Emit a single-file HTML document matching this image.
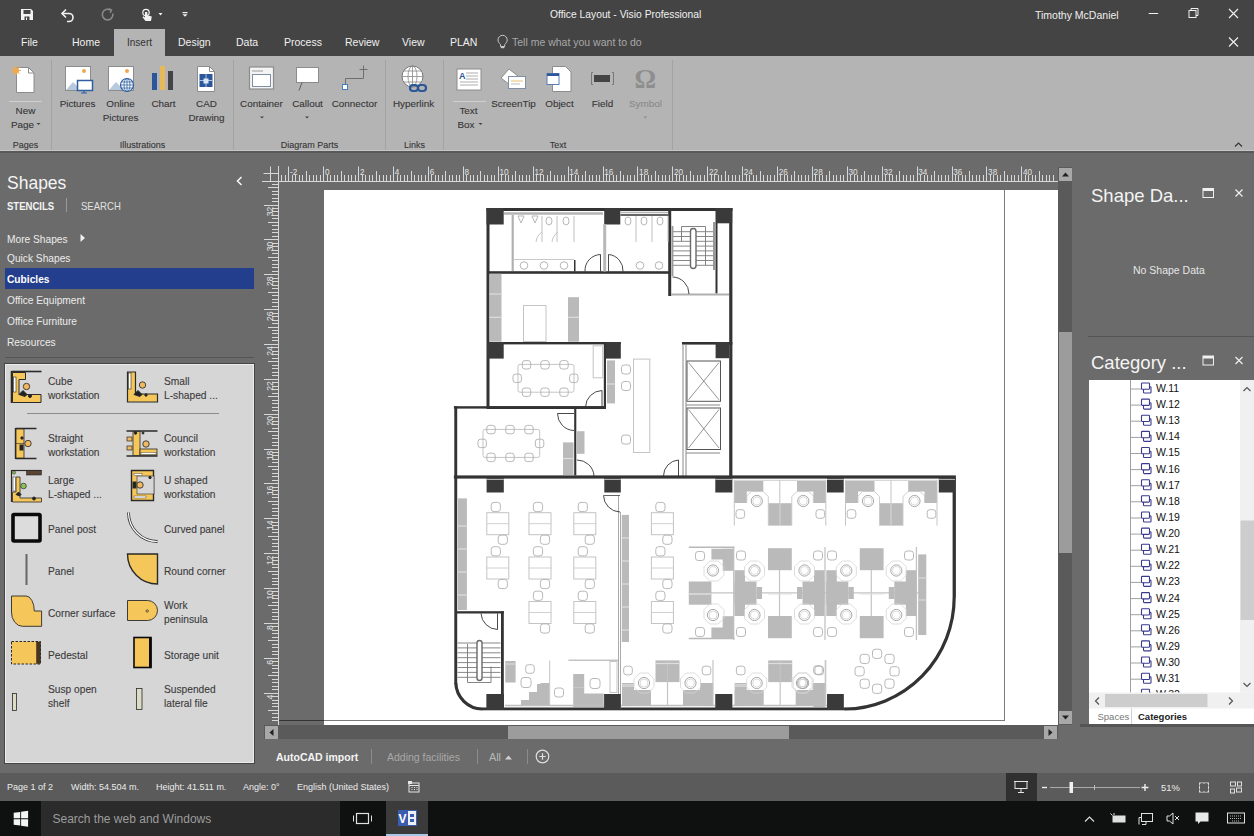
<!DOCTYPE html>
<html><head><meta charset="utf-8"><style>
*{margin:0;padding:0;box-sizing:border-box}
html,body{width:1254px;height:836px;overflow:hidden;background:#6b6b6b;font-family:"Liberation Sans",sans-serif}
.a{position:absolute}
.t{position:absolute;white-space:nowrap;line-height:1}
.rb{position:absolute;text-align:center;font-size:9.9px;line-height:14.2px;color:#353535;white-space:nowrap}
.gl{font-size:9px!important}
.st{position:absolute;font-size:10.2px;line-height:14.3px;color:#3a3a3a;white-space:nowrap}
.rb,.st{-webkit-text-stroke:0.1px currentColor}

</style></head><body>
<div class="a" style="left:0;top:0;width:1254px;height:56px;background:#444"></div>
<div class="a" style="left:114px;top:29px;width:51px;height:27px;background:#b4b4b4"></div>
<svg class="a" style="left:0;top:0" width="200" height="28" viewBox="0 0 200 28">
 <!-- save -->
 <path d="M21 9h10l2 2v9H21z" fill="#f2f2f2"/>
 <rect x="23.5" y="10" width="7" height="4" fill="#444"/>
 <rect x="24.5" y="16.5" width="5" height="3.5" fill="#444"/>
 <rect x="26" y="17.5" width="1" height="2.5" fill="#f2f2f2"/>
 <!-- undo -->
 <path d="M62.5 13.5h6.5a4 4 0 0 1 0 8h-2" fill="none" stroke="#f2f2f2" stroke-width="1.6"/>
 <path d="M66 9.5l-4 4 4 4" fill="none" stroke="#f2f2f2" stroke-width="1.6"/>
 <!-- redo (disabled) -->
 <path d="M110.5 10.2a5.3 5.3 0 1 0 2.3 3.5" fill="none" stroke="#8a8a8a" stroke-width="1.6"/>
 <path d="M108.5 8.6l3 1.3-1.3 3" fill="none" stroke="#8a8a8a" stroke-width="1.4"/>
 <!-- touch -->
 <circle cx="146" cy="12.5" r="3.2" fill="none" stroke="#f2f2f2" stroke-width="1.2"/>
 <path d="M145 12v5.5l-1.5-1.2-1 1 3 3.7h5.5l0.8-4.5-4.5-1.2V12z" fill="#f2f2f2"/>
 <path d="M158.5 13h4l-2 2.5z" fill="#f2f2f2"/>
 <!-- customize -->
 <rect x="182.5" y="12" width="5" height="1.2" fill="#f2f2f2"/>
 <path d="M182.5 14.3h5l-2.5 2.5z" fill="#f2f2f2"/>
 </svg>
<svg class="a" style="left:1140px;top:0" width="114" height="56" viewBox="1140 0 114 56">
 <rect x="1148.7" y="13" width="9.5" height="1" fill="#f2f2f2"/>
 <rect x="1189" y="10.5" width="7" height="7" fill="none" stroke="#f2f2f2" stroke-width="1"/>
 <path d="M1191 10.5V8.5h7v7h-2" fill="none" stroke="#f2f2f2" stroke-width="1"/>
 <path d="M1229 9l9 9M1238 9l-9 9" stroke="#f2f2f2" stroke-width="1.1"/>
 <path d="M1229 37.5l9 9M1238 37.5l-9 9" stroke="#f2f2f2" stroke-width="1.1"/>
</svg>
<div class="t" style="left:550px;top:9.5px;font-size:10.3px;color:#f0f0f0">Office Layout - Visio Professional</div>
<div class="t" style="left:1035px;top:9.5px;font-size:10.5px;color:#f0f0f0">Timothy McDaniel</div>
<div class="t" style="left:21px;top:37px;font-size:10.5px;color:#f0f0f0">File</div>
<div class="t" style="left:72px;top:37px;font-size:10.5px;color:#f0f0f0">Home</div>
<div class="t" style="left:127px;top:38px;font-size:10px;color:#333">Insert</div>
<div class="t" style="left:178px;top:37px;font-size:10.5px;color:#f0f0f0">Design</div>
<div class="t" style="left:236px;top:37px;font-size:10.5px;color:#f0f0f0">Data</div>
<div class="t" style="left:284px;top:37px;font-size:10.5px;color:#f0f0f0">Process</div>
<div class="t" style="left:345px;top:37px;font-size:10.5px;color:#f0f0f0">Review</div>
<div class="t" style="left:402px;top:37px;font-size:10.5px;color:#f0f0f0">View</div>
<div class="t" style="left:450px;top:37px;font-size:10.5px;color:#f0f0f0">PLAN</div>
<svg class="a" style="left:496px;top:34px" width="14" height="16" viewBox="0 0 14 16">
 <path d="M4.5 10.5c-1.5-1.5-2.5-2.8-2.5-4.6a4.6 4.6 0 0 1 9.2 0c0 1.8-1 3.1-2.5 4.6v2h-4.2z" fill="none" stroke="#c8c8c8" stroke-width="1"/>
 <rect x="4.8" y="13" width="3.6" height="1.2" fill="#c8c8c8"/>
</svg>
<div class="t" style="left:512px;top:37px;font-size:10.5px;color:#a8a8a8">Tell me what you want to do</div>
<div class="a" style="left:0;top:56px;width:1254px;height:95px;background:#b4b4b4"></div>
<div class="a" style="left:0;top:150px;width:1254px;height:1px;background:#c6c6c6"></div>
<div class="a" style="left:0;top:151px;width:1254px;height:2px;background:#595959"></div>
<svg class="a" style="left:0;top:56px" width="1254" height="95" viewBox="0 56 1254 95">
 <g stroke="#a3a3a3" stroke-width="1">
  <line x1="51.5" y1="60" x2="51.5" y2="150"/>
  <line x1="233.5" y1="60" x2="233.5" y2="150"/>
  <line x1="385.5" y1="60" x2="385.5" y2="150"/>
  <line x1="443.5" y1="60" x2="443.5" y2="150"/>
  <line x1="672.5" y1="60" x2="672.5" y2="150"/>
 </g>
 <g stroke="#cfcfcf" stroke-width="1">
  <line x1="9" y1="101.5" x2="42" y2="101.5"/>
  <line x1="453" y1="101.5" x2="486" y2="101.5"/>
 </g>
 <!-- new page -->
 <path d="M16.5 67.5h12l5.5 5.5v19.5h-17.5z" fill="#fff" stroke="#8c8c8c" stroke-width="1"/>
 <path d="M28.5 67.5v5.5h5.5" fill="none" stroke="#8c8c8c"/>
 <circle cx="16" cy="70.5" r="3" fill="#f0a950"/>
 <g stroke="#f0a950" stroke-width="1"><path d="M16 65.5v10M11 70.5h10M12.5 67l7 7M19.5 67l-7 7"/></g>
 <!-- pictures -->
 <rect x="65.5" y="66.5" width="25" height="24" fill="#fff" stroke="#8c8c8c"/>
 <path d="M66 90l7-8 5 5 3-3 7 6z" fill="#b7c9dc"/>
 <circle cx="84" cy="71" r="2" fill="#f0a950"/>
 <rect x="77.5" y="80.5" width="15" height="10" fill="#fff" stroke="#2f5f9f" stroke-width="1.5"/>
 <path d="M84 91v2h-3h6" stroke="#2f5f9f" stroke-width="1.2" fill="none"/>
 <!-- online pictures -->
 <rect x="108.5" y="66.5" width="25" height="24" fill="#fff" stroke="#8c8c8c"/>
 <path d="M109 90l7-8 5 5 3-3 7 6z" fill="#b7c9dc"/>
 <circle cx="127" cy="71" r="2" fill="#f0a950"/>
 <circle cx="127" cy="85" r="6.5" fill="#fff" stroke="#2f5f9f" stroke-width="1.2"/>
 <path d="M120.5 85h13M127 78.5v13M121.5 82h11M121.5 88h11" stroke="#2f5f9f" stroke-width="0.8"/>
 <ellipse cx="127" cy="85" rx="3" ry="6.5" fill="none" stroke="#2f5f9f" stroke-width="0.8"/>
 <!-- chart -->
 <rect x="152" y="73" width="5" height="17" fill="#2b579a"/>
 <rect x="160" y="66" width="5" height="24" fill="#e8b959"/>
 <rect x="168" y="71" width="5" height="19" fill="#444"/>
 <!-- CAD drawing -->
 <path d="M197.5 66.5h12l5 5v20h-17z" fill="#fff" stroke="#8c8c8c"/>
 <path d="M209.5 66.5v5h5" fill="none" stroke="#8c8c8c"/>
 <rect x="199.5" y="74" width="13" height="13" fill="#2b579a"/>
 <path d="M206 74v13M199.5 80.5h13" stroke="#a9c3e6" stroke-width="1"/>
 <rect x="203.5" y="78.5" width="5" height="5" fill="#dbe6f4"/>
 <!-- container -->
 <rect x="249.5" y="67" width="24" height="22" fill="#f4f4f4" stroke="#8c8c8c" stroke-width="1.2"/>
 <line x1="252" y1="71" x2="263" y2="71" stroke="#999"/>
 <rect x="252.5" y="74.5" width="18" height="12" fill="#fff" stroke="#7f8fa5"/>
 <!-- callout -->
 <rect x="296.5" y="67.5" width="22" height="15" fill="#fff" stroke="#8c8c8c"/>
 <line x1="302" y1="82.5" x2="299" y2="90.5" stroke="#555" stroke-width="0.9"/>
 <!-- connector -->
 <path d="M363.5 69v9.5h-18v6.5" fill="none" stroke="#6e6e6e" stroke-width="1"/>
 <path d="M359.5 69.5h8M363.5 65.5v8" stroke="#6e6e6e"/>
 <rect x="342.5" y="84.5" width="5" height="5" fill="#fff" stroke="#4a7cc0"/>
 <!-- hyperlink -->
 <circle cx="412.5" cy="76.5" r="10.5" fill="#fff" stroke="#777" stroke-width="1"/>
 <ellipse cx="412.5" cy="76.5" rx="4.5" ry="10.5" fill="none" stroke="#888" stroke-width="0.8"/>
 <path d="M402 76.5h21M403.5 71h18M403.5 82h18M412.5 66v21" stroke="#888" stroke-width="0.8"/>
 <g fill="none" stroke="#2b579a" stroke-width="2.2">
  <rect x="410" y="85" width="8" height="6" rx="3"/>
  <rect x="418" y="85" width="8" height="6" rx="3"/>
 </g>
 <!-- text box -->
 <rect x="457" y="69" width="24" height="21" fill="#fff" stroke="#8c8c8c"/>
 <text x="459" y="79" font-family="Liberation Sans" font-size="9" font-weight="bold" fill="#2b579a">A</text>
 <g stroke="#999" stroke-width="0.8"><path d="M466 73h12M466 76h12M466 79h12M460 82h18M460 85h18"/></g>
 <!-- screentip -->
 <path d="M501 78l8-9 9 7-8 9z" fill="#fff" stroke="#8c8c8c"/>
 <rect x="508.5" y="76.5" width="17" height="12" fill="#fff" stroke="#7f8fa5"/>
 <g stroke="#e8c070" stroke-width="1"><path d="M511 81h12"/></g>
 <g stroke="#aaa" stroke-width="0.8"><path d="M511 84h9"/></g>
 <!-- object -->
 <path d="M552.5 66.5h13l5.5 5.5v19.5h-18.5z" fill="#fff" stroke="#8c8c8c"/>
 <rect x="547" y="73.5" width="12" height="11" fill="#fff" stroke="#5b7db0" stroke-width="1"/>
 <rect x="547" y="73.5" width="12" height="2.5" fill="#2b579a"/>
 <!-- field -->
 <path d="M593 72.5h-1.5v12h1.5M612 72.5h1.5v12H612" fill="none" stroke="#777"/>
 <rect x="594" y="75" width="16" height="7" fill="#444"/>
 <!-- symbol -->
 <text x="645.3" y="87.5" text-anchor="middle" font-family="Liberation Serif" font-size="27" font-weight="bold" fill="#8e8e8e">&#937;</text>
 <!-- dropdown arrows -->
 <g fill="#444">
  <path d="M36.5 123h4l-2 2z"/><path d="M478.5 123h4l-2 2z"/>
  <path d="M260 116.5h4l-2 2z"/><path d="M305 116.5h4l-2 2z"/>
 </g>
 <path d="M643.3 116.5h4l-2 2z" fill="#8e8e8e"/>
 <!-- collapse -->
 <path d="M1235 146.5l3.5-3.5 3.5 3.5" fill="none" stroke="#333" stroke-width="1.2"/>
</svg>
<div class="rb" style="left:0;width:51px;top:104px">New</div>
<div class="rb" style="left:11px;top:118px;text-align:left">Page</div>
<div class="rb" style="left:52px;width:51px;top:97px">Pictures</div>
<div class="rb" style="left:95px;width:51px;top:97px">Online<br>Pictures</div>
<div class="rb" style="left:138px;width:51px;top:97px">Chart</div>
<div class="rb" style="left:181px;width:51px;top:97px">CAD<br>Drawing</div>
<div class="rb" style="left:236px;width:51px;top:97px">Container</div>
<div class="rb" style="left:282px;width:51px;top:97px">Callout</div>
<div class="rb" style="left:329px;width:51px;top:97px">Connector</div>
<div class="rb" style="left:388px;width:51px;top:97px">Hyperlink</div>
<div class="rb" style="left:443px;width:51px;top:104px">Text</div>
<div class="rb" style="left:457.5px;top:118px;text-align:left">Box</div>
<div class="rb" style="left:488px;width:51px;top:97px">ScreenTip</div>
<div class="rb" style="left:534px;width:51px;top:97px">Object</div>
<div class="rb" style="left:577px;width:51px;top:97px">Field</div>
<div class="rb" style="left:620px;width:51px;top:97px;color:#8a8a8a">Symbol</div>
<div class="rb gl" style="left:0;width:51px;top:138px">Pages</div>
<div class="rb gl" style="left:52px;width:181px;top:138px">Illustrations</div>
<div class="rb gl" style="left:234px;width:151px;top:138px">Diagram Parts</div>
<div class="rb gl" style="left:386px;width:57px;top:138px">Links</div>
<div class="rb gl" style="left:444px;width:228px;top:138px">Text</div>
<div class="t" style="left:7px;top:175px;font-size:17.5px;color:#f4f4f4">Shapes</div>
<svg class="a" style="left:234px;top:175px" width="10" height="12" viewBox="0 0 10 12"><path d="M7.5 2l-4 4 4 4" fill="none" stroke="#f4f4f4" stroke-width="1.6"/></svg>
<div class="t" style="left:7px;top:201px;font-size:11.5px;font-weight:bold;color:#f4f4f4;transform:scaleX(0.83);transform-origin:0 0">STENCILS</div>
<div class="a" style="left:66px;top:198px;width:1px;height:14px;background:#999"></div>
<div class="t" style="left:81px;top:201px;font-size:11.5px;color:#e0e0e0;transform:scaleX(0.83);transform-origin:0 0">SEARCH</div>
<div class="t" style="left:7px;top:234.5px;font-size:10.2px;color:#ececec">More Shapes</div>
<svg class="a" style="left:79px;top:232px" width="8" height="12" viewBox="0 0 8 12"><path d="M1.5 2l4.5 4-4.5 4z" fill="#f0f0f0"/></svg>
<div class="t" style="left:7px;top:254px;font-size:10.2px;color:#ececec">Quick Shapes</div>
<div class="a" style="left:5px;top:268px;width:249px;height:21px;background:#243e8e"></div>
<div class="t" style="left:7px;top:275px;font-size:10.2px;font-weight:bold;color:#fff">Cubicles</div>
<div class="t" style="left:7px;top:296px;font-size:10.2px;color:#ececec">Office Equipment</div>
<div class="t" style="left:7px;top:317px;font-size:10.2px;color:#ececec">Office Furniture</div>
<div class="t" style="left:7px;top:338px;font-size:10.2px;color:#ececec">Resources</div>
<div class="a" style="left:5px;top:357px;width:249px;height:1px;background:#555"></div>
<div class="a" style="left:4px;top:362.5px;width:251px;height:401px;background:#d6d6d6;border:1px solid #454545;box-shadow:inset 0 0 0 1px #ececec"></div>
<div class="a" style="left:27px;top:413px;width:192px;height:1px;background:#8c8c8c"></div>
<svg class="a" style="left:0;top:360px" width="260" height="360" viewBox="0 360 260 360">
 <defs>
  <g id="chair"><circle r="3.2" fill="#f0b860" stroke="#333" stroke-width="0.9"/></g>
 </defs>
 <g stroke="#2a2a2a" stroke-width="1">
 <!-- cube workstation -->
 <path d="M11.5 371.5h30" stroke-width="1.6"/>
 <path d="M11.5 371v32" stroke-width="1.6"/>
 <path d="M12.5 372.5h13v7h-6.5v15h22v8h-28.5z" fill="#f5c75a"/>
 <rect x="13.5" y="377" width="2.5" height="15" fill="#fff" stroke-width="0.6"/>
 <path d="M19 394.5l4-4 4 4-2 2z" fill="#222"/>
 <circle cx="30" cy="396" r="1.5" fill="#222"/>
 <use href="#chair" x="26.5" y="386.5"/>
 <!-- small L -->
 <path d="M127.5 372h8v22h22v8h-30z" fill="#f5c75a" stroke-width="1.2"/>
 <rect x="128.5" y="373" width="2.5" height="16" fill="#fff" stroke-width="0.6"/>
 <path d="M134 394.5l4-4 4 4-2 2z" fill="#222"/>
 <circle cx="146" cy="395" r="1.2" fill="#222"/>
 <use href="#chair" x="142.5" y="385"/>
 <!-- straight -->
 <path d="M15.5 428.5h21M15.5 458.5h21" stroke-width="1.4"/>
 <path d="M15.5 428v31" stroke-width="1.4"/>
 <rect x="16" y="429" width="8" height="29" fill="#f5c75a" stroke-width="0.8"/>
 <path d="M16 443.5h8" stroke-width="0.6"/>
 <rect x="20" y="445" width="3" height="5" fill="#222"/>
 <circle cx="22" cy="438" r="1.2" fill="#222"/>
 <use href="#chair" x="28" y="443.5"/>
 <!-- council -->
 <path d="M126.5 431h31M126.5 456h31" stroke-width="1.4"/>
 <rect x="133" y="431.5" width="7" height="24" fill="#f5c75a" stroke-width="0.8"/>
 <rect x="140" y="449" width="17" height="6" fill="#f5c75a" stroke-width="0.8"/>
 <rect x="141" y="452.5" width="15" height="2" fill="#fff" stroke-width="0.4"/>
 <rect x="127" y="437" width="5" height="4" fill="#f0b860" stroke-width="0.7"/>
 <rect x="127" y="446" width="5" height="4" fill="#f0b860" stroke-width="0.7"/>
 <circle cx="135.5" cy="433" r="1.3" fill="#222"/><circle cx="143" cy="433" r="1" fill="#222"/>
 <use href="#chair" x="146" y="444"/>
 <!-- large L -->
 <path d="M11.5 470.5h30" stroke-width="1.2"/>
 <path d="M11.5 470v32" stroke-width="1.2"/>
 <rect x="26.5" y="470.5" width="15" height="4.5" fill="#5a4330" stroke-width="0.6"/>
 <path d="M12.5 492h3.5v-15h4v21h21.5v4h-29z" fill="#f5c75a" stroke-width="0.8"/>
 <rect x="13" y="477" width="2.5" height="14" fill="#fff" stroke-width="0.5"/>
 <circle cx="14" cy="472.5" r="1.6" fill="#7fb74a" stroke-width="0.5"/>
 <circle cx="23.5" cy="486" r="2.8" fill="#8cc056" stroke-width="0.7"/>
 <circle cx="34" cy="498.5" r="1.5" fill="#222"/>
 <path d="M16 494.5l2.5-2.5 2.5 2.5-1.5 1.5z" fill="#222"/>
 <!-- U shaped -->
 <path d="M131.5 470.5h22v30h-22z" fill="#f5c75a" stroke-width="1.4"/>
 <rect x="137" y="476" width="17" height="18" fill="#d6d6d6" stroke-width="0.6"/>
 <rect x="134" y="473.5" width="8" height="2" fill="#fff" stroke-width="0.4"/>
 <rect x="134" y="496" width="12" height="2" fill="#fff" stroke-width="0.4"/>
 <rect x="133" y="482" width="3" height="6" fill="#222"/>
 <circle cx="150" cy="477.5" r="1.2" fill="#222"/>
 <use href="#chair" x="140" y="485"/>
 <!-- panel post -->
 <rect x="13" y="514.5" width="27" height="26.5" fill="#dcdcdc" stroke="#0a0a0a" stroke-width="3.6" rx="1"/>
 <!-- curved panel -->
 <path d="M128.5 512.5A29 29 0 0 0 157.5 541.5" fill="none" stroke="#333" stroke-width="2.8"/>
 <path d="M128.5 512.5A29 29 0 0 0 157.5 541.5" fill="none" stroke="#fff" stroke-width="1.2"/>
 <!-- panel -->
 <path d="M26.5 554v31" stroke="#666" stroke-width="2"/>
 <!-- round corner -->
 <path d="M127.5 554h30v30A30 30 0 0 1 127.5 554z" fill="#f5c75a" stroke-width="1.4"/>
 <!-- corner surface -->
 <path d="M11.5 596h14.5A8.3 15 0 0 1 34.3 611h7.3v15.3h-19A11 14 0 0 1 11.5 612z" fill="#f5c75a" stroke-width="0.9"/>
 <!-- work peninsula -->
 <path d="M127.5 600.5h20a10 10 0 0 1 0 20h-20z" fill="#f5c75a" stroke-width="0.9"/>
 <circle cx="147.2" cy="611" r="1.2" fill="none" stroke-width="0.7"/>
 <!-- pedestal -->
 <rect x="11.5" y="641.5" width="29" height="22.5" fill="#f5c75a" stroke-width="1" stroke-dasharray="2.5 1.5"/>
 <rect x="36.5" y="642" width="4" height="21.5" fill="#4a3420" stroke-width="0.5"/>
 <!-- storage unit -->
 <rect x="134" y="637.5" width="17" height="30" fill="#f5c75a" stroke="#0a0a0a" stroke-width="1.6"/>
 <rect x="149" y="637.5" width="2.5" height="30" fill="#0a0a0a" stroke="none"/>
 <!-- susp open shelf -->
 <rect x="12.5" y="693.5" width="4" height="17" fill="#dcdcc4" stroke-width="0.8"/>
 <!-- suspended lateral file -->
 <rect x="136.5" y="688.5" width="5.5" height="21" fill="#dcdcc4" stroke-width="0.8"/>
 </g>
</svg>
<div class="st" style="left:48px;top:375px">Cube<br>workstation</div>
<div class="st" style="left:164px;top:375px">Small<br>L-shaped ...</div>
<div class="st" style="left:48px;top:432px">Straight<br>workstation</div>
<div class="st" style="left:164px;top:432px">Council<br>workstation</div>
<div class="st" style="left:48px;top:474px">Large<br>L-shaped ...</div>
<div class="st" style="left:164px;top:474px">U shaped<br>workstation</div>
<div class="st" style="left:48px;top:523px">Panel post</div>
<div class="st" style="left:164px;top:523px">Curved panel</div>
<div class="st" style="left:48px;top:565px">Panel</div>
<div class="st" style="left:164px;top:565px">Round corner</div>
<div class="st" style="left:48px;top:607px">Corner surface</div>
<div class="st" style="left:164px;top:599px">Work<br>peninsula</div>
<div class="st" style="left:48px;top:649px">Pedestal</div>
<div class="st" style="left:164px;top:649px">Storage unit</div>
<div class="st" style="left:48px;top:683px">Susp open<br>shelf</div>
<div class="st" style="left:164px;top:683px">Suspended<br>lateral file</div>
<svg class="a" style="left:258px;top:160px" width="800" height="565" viewBox="258 160 800 565">
<path d="M262 181.5H1058" stroke="#d8d8d8" stroke-width="1"/>
<path d="M278.5 166V725" stroke="#d8d8d8" stroke-width="1"/>
<path d="M270.5 166.5v14.5M263.5 173.5h15" stroke="#d8d8d8" stroke-width="1"/>
<path d="M281.5 175V181M285.5 175V181M288.5 166.5V181M292.5 175V181M295.5 175V181M299.5 175V181M302.5 175V181M306.5 171V181M309.5 175V181M313.5 175V181M316.5 175V181M320.5 175V181M323.5 166.5V181M327.5 175V181M330.5 175V181M334.5 175V181M337.5 175V181M341.5 171V181M344.5 175V181M348.5 175V181M351.5 175V181M355.5 175V181M358.5 166.5V181M362.5 175V181M365.5 175V181M369.5 175V181M372.5 175V181M376.5 171V181M379.5 175V181M383.5 175V181M386.5 175V181M390.5 175V181M393.5 166.5V181M397.5 175V181M400.5 175V181M404.5 175V181M407.5 175V181M411.5 171V181M414.5 175V181M418.5 175V181M421.5 175V181M425.5 175V181M428.5 166.5V181M431.5 175V181M435.5 175V181M438.5 175V181M442.5 175V181M445.5 171V181M449.5 175V181M452.5 175V181M456.5 175V181M459.5 175V181M463.5 166.5V181M466.5 175V181M470.5 175V181M473.5 175V181M477.5 175V181M480.5 171V181M484.5 175V181M487.5 175V181M491.5 175V181M494.5 175V181M498.5 166.5V181M501.5 175V181M505.5 175V181M508.5 175V181M512.5 175V181M515.5 171V181M519.5 175V181M522.5 175V181M526.5 175V181M529.5 175V181M533.5 166.5V181M536.5 175V181M540.5 175V181M543.5 175V181M547.5 175V181M550.5 171V181M554.5 175V181M557.5 175V181M561.5 175V181M564.5 175V181M568.5 166.5V181M571.5 175V181M575.5 175V181M578.5 175V181M582.5 175V181M585.5 171V181M589.5 175V181M592.5 175V181M596.5 175V181M599.5 175V181M603.5 166.5V181M606.5 175V181M609.5 175V181M613.5 175V181M616.5 175V181M620.5 171V181M623.5 175V181M627.5 175V181M630.5 175V181M634.5 175V181M637.5 166.5V181M641.5 175V181M644.5 175V181M648.5 175V181M651.5 175V181M655.5 171V181M658.5 175V181M662.5 175V181M665.5 175V181M669.5 175V181M672.5 166.5V181M676.5 175V181M679.5 175V181M683.5 175V181M686.5 175V181M690.5 171V181M693.5 175V181M697.5 175V181M700.5 175V181M704.5 175V181M707.5 166.5V181M711.5 175V181M714.5 175V181M718.5 175V181M721.5 175V181M725.5 171V181M728.5 175V181M732.5 175V181M735.5 175V181M739.5 175V181M742.5 166.5V181M746.5 175V181M749.5 175V181M753.5 175V181M756.5 175V181M760.5 171V181M763.5 175V181M767.5 175V181M770.5 175V181M774.5 175V181M777.5 166.5V181M780.5 175V181M784.5 175V181M787.5 175V181M791.5 175V181M794.5 171V181M798.5 175V181M801.5 175V181M805.5 175V181M808.5 175V181M812.5 166.5V181M815.5 175V181M819.5 175V181M822.5 175V181M826.5 175V181M829.5 171V181M833.5 175V181M836.5 175V181M840.5 175V181M843.5 175V181M847.5 166.5V181M850.5 175V181M854.5 175V181M857.5 175V181M861.5 175V181M864.5 171V181M868.5 175V181M871.5 175V181M875.5 175V181M878.5 175V181M882.5 166.5V181M885.5 175V181M889.5 175V181M892.5 175V181M896.5 175V181M899.5 171V181M903.5 175V181M906.5 175V181M910.5 175V181M913.5 175V181M917.5 166.5V181M920.5 175V181M924.5 175V181M927.5 175V181M931.5 175V181M934.5 171V181M938.5 175V181M941.5 175V181M945.5 175V181M948.5 175V181M952.5 166.5V181M955.5 175V181M958.5 175V181M962.5 175V181M965.5 175V181M969.5 171V181M972.5 175V181M976.5 175V181M979.5 175V181M983.5 175V181M986.5 166.5V181M990.5 175V181M993.5 175V181M997.5 175V181M1000.5 175V181M1004.5 171V181M1007.5 175V181M1011.5 175V181M1014.5 175V181M1018.5 175V181M1021.5 166.5V181M1025.5 175V181M1028.5 175V181M1032.5 175V181M1035.5 175V181M1039.5 171V181M1042.5 175V181M1046.5 175V181M1049.5 175V181M1053.5 175V181" stroke="#d8d8d8" stroke-width="1"/>
<g font-family="Liberation Sans"><text x="290.1" y="175.3" font-size="8.2" fill="#e4e4e4">-2</text><text x="325.0" y="175.3" font-size="8.2" fill="#e4e4e4">0</text><text x="359.9" y="175.3" font-size="8.2" fill="#e4e4e4">2</text><text x="394.8" y="175.3" font-size="8.2" fill="#e4e4e4">4</text><text x="429.7" y="175.3" font-size="8.2" fill="#e4e4e4">6</text><text x="464.6" y="175.3" font-size="8.2" fill="#e4e4e4">8</text><text x="499.5" y="175.3" font-size="8.2" fill="#e4e4e4">10</text><text x="534.4" y="175.3" font-size="8.2" fill="#e4e4e4">12</text><text x="569.3" y="175.3" font-size="8.2" fill="#e4e4e4">14</text><text x="604.2" y="175.3" font-size="8.2" fill="#e4e4e4">16</text><text x="639.1" y="175.3" font-size="8.2" fill="#e4e4e4">18</text><text x="674.0" y="175.3" font-size="8.2" fill="#e4e4e4">20</text><text x="708.9" y="175.3" font-size="8.2" fill="#e4e4e4">22</text><text x="743.8" y="175.3" font-size="8.2" fill="#e4e4e4">24</text><text x="778.7" y="175.3" font-size="8.2" fill="#e4e4e4">26</text><text x="813.6" y="175.3" font-size="8.2" fill="#e4e4e4">28</text><text x="848.5" y="175.3" font-size="8.2" fill="#e4e4e4">30</text><text x="883.4" y="175.3" font-size="8.2" fill="#e4e4e4">32</text><text x="918.3" y="175.3" font-size="8.2" fill="#e4e4e4">34</text><text x="953.2" y="175.3" font-size="8.2" fill="#e4e4e4">36</text><text x="988.1" y="175.3" font-size="8.2" fill="#e4e4e4">38</text><text x="1023.0" y="175.3" font-size="8.2" fill="#e4e4e4">40</text></g>
<path d="M272 184.5H278M268 187.5H278M272 191.5H278M272 194.5H278M272 198.5H278M272 201.5H278M264 205.5H278M272 208.5H278M272 211.5H278M272 215.5H278M272 218.5H278M268 222.5H278M272 225.5H278M272 229.5H278M272 232.5H278M272 236.5H278M264 239.5H278M272 243.5H278M272 246.5H278M272 250.5H278M272 253.5H278M268 257.5H278M272 260.5H278M272 264.5H278M272 267.5H278M272 271.5H278M264 274.5H278M272 278.5H278M272 281.5H278M272 285.5H278M272 288.5H278M268 292.5H278M272 295.5H278M272 299.5H278M272 302.5H278M272 306.5H278M264 309.5H278M272 313.5H278M272 316.5H278M272 320.5H278M272 323.5H278M268 327.5H278M272 330.5H278M272 333.5H278M272 337.5H278M272 340.5H278M264 344.5H278M272 347.5H278M272 351.5H278M272 354.5H278M272 358.5H278M268 361.5H278M272 365.5H278M272 368.5H278M272 372.5H278M272 375.5H278M264 379.5H278M272 382.5H278M272 386.5H278M272 389.5H278M272 393.5H278M268 396.5H278M272 400.5H278M272 403.5H278M272 407.5H278M272 410.5H278M264 414.5H278M272 417.5H278M272 421.5H278M272 424.5H278M272 428.5H278M268 431.5H278M272 435.5H278M272 438.5H278M272 442.5H278M272 445.5H278M264 449.5H278M272 452.5H278M272 455.5H278M272 459.5H278M272 462.5H278M268 466.5H278M272 469.5H278M272 473.5H278M272 476.5H278M272 480.5H278M264 483.5H278M272 487.5H278M272 490.5H278M272 494.5H278M272 497.5H278M268 501.5H278M272 504.5H278M272 508.5H278M272 511.5H278M272 515.5H278M264 518.5H278M272 522.5H278M272 525.5H278M272 529.5H278M272 532.5H278M268 536.5H278M272 539.5H278M272 543.5H278M272 546.5H278M272 550.5H278M264 553.5H278M272 557.5H278M272 560.5H278M272 564.5H278M272 567.5H278M268 571.5H278M272 574.5H278M272 578.5H278M272 581.5H278M272 584.5H278M264 588.5H278M272 591.5H278M272 595.5H278M272 598.5H278M272 602.5H278M268 605.5H278M272 609.5H278M272 612.5H278M272 616.5H278M272 619.5H278M264 623.5H278M272 626.5H278M272 630.5H278M272 633.5H278M272 637.5H278M268 640.5H278M272 644.5H278M272 647.5H278M272 651.5H278M272 654.5H278M264 658.5H278M272 661.5H278M272 665.5H278M272 668.5H278M272 672.5H278M268 675.5H278M272 679.5H278M272 682.5H278M272 686.5H278M272 689.5H278M264 693.5H278M272 696.5H278M272 700.5H278M272 703.5H278M272 706.5H278M268 710.5H278M272 713.5H278M272 717.5H278M272 720.5H278" stroke="#d8d8d8" stroke-width="1"/>
<g font-family="Liberation Sans"><text transform="translate(272.5 206.8) rotate(-90)" text-anchor="end" font-size="8.6" fill="#e4e4e4">32</text><text transform="translate(272.5 241.7) rotate(-90)" text-anchor="end" font-size="8.6" fill="#e4e4e4">30</text><text transform="translate(272.5 276.5) rotate(-90)" text-anchor="end" font-size="8.6" fill="#e4e4e4">28</text><text transform="translate(272.5 311.4) rotate(-90)" text-anchor="end" font-size="8.6" fill="#e4e4e4">26</text><text transform="translate(272.5 346.2) rotate(-90)" text-anchor="end" font-size="8.6" fill="#e4e4e4">24</text><text transform="translate(272.5 381.1) rotate(-90)" text-anchor="end" font-size="8.6" fill="#e4e4e4">22</text><text transform="translate(272.5 416.0) rotate(-90)" text-anchor="end" font-size="8.6" fill="#e4e4e4">20</text><text transform="translate(272.5 450.8) rotate(-90)" text-anchor="end" font-size="8.6" fill="#e4e4e4">18</text><text transform="translate(272.5 485.7) rotate(-90)" text-anchor="end" font-size="8.6" fill="#e4e4e4">16</text><text transform="translate(272.5 520.5) rotate(-90)" text-anchor="end" font-size="8.6" fill="#e4e4e4">14</text><text transform="translate(272.5 555.4) rotate(-90)" text-anchor="end" font-size="8.6" fill="#e4e4e4">12</text><text transform="translate(272.5 590.3) rotate(-90)" text-anchor="end" font-size="8.6" fill="#e4e4e4">10</text><text transform="translate(272.5 625.1) rotate(-90)" text-anchor="end" font-size="8.6" fill="#e4e4e4">8</text><text transform="translate(272.5 660.0) rotate(-90)" text-anchor="end" font-size="8.6" fill="#e4e4e4">6</text><text transform="translate(272.5 694.8) rotate(-90)" text-anchor="end" font-size="8.6" fill="#e4e4e4">4</text></g>
</svg>
<div class="a" style="left:324px;top:190px;width:734px;height:535px;background:#fff"></div>
<div class="a" style="left:1003.5px;top:190px;width:1.5px;height:531px;background:#7a7a7a"></div>
<div class="a" style="left:324px;top:719.5px;width:681px;height:1.5px;background:#7a7a7a"></div>
<div class="a" style="left:279px;top:719.5px;width:45px;height:1.5px;background:#333"></div>
<div class="a" style="left:1058px;top:167px;width:14px;height:558px;background:#5a5a5a"></div>
<div class="a" style="left:1059px;top:168px;width:13px;height:13px;background:#a8a8a8"></div>
<svg class="a" style="left:1059px;top:168px" width="13" height="13"><path d="M3 8.5h7l-3.5-4z" fill="#222"/></svg>
<div class="a" style="left:1059px;top:331.5px;width:13px;height:221.5px;background:#9c9c9c"></div>
<div class="a" style="left:1059px;top:711px;width:13px;height:13px;background:#a8a8a8"></div>
<svg class="a" style="left:1059px;top:711px" width="13" height="13"><path d="M3 4.5h7l-3.5 4z" fill="#222"/></svg>
<div class="a" style="left:264px;top:725px;width:794px;height:14px;background:#5a5a5a"></div>
<div class="a" style="left:265px;top:726px;width:13px;height:13px;background:#a8a8a8"></div>
<svg class="a" style="left:265px;top:726px" width="13" height="13"><path d="M8.5 3v7l-4-3.5z" fill="#222"/></svg>
<div class="a" style="left:507.5px;top:726px;width:281px;height:13px;background:#9c9c9c"></div>
<div class="a" style="left:1044px;top:726px;width:13px;height:13px;background:#a8a8a8"></div>
<svg class="a" style="left:1044px;top:726px" width="13" height="13"><path d="M4.5 3v7l4-3.5z" fill="#222"/></svg><svg class="a" style="left:440px;top:200px" width="530" height="520" viewBox="440 200 530 520"><rect x="486.5" y="208.0" width="246.0" height="3.0" fill="#333"/><rect x="486.5" y="208.0" width="3.0" height="200.0" fill="#333"/><rect x="729.2" y="208.0" width="3.2" height="270.0" fill="#333"/><rect x="489.0" y="271.2" width="182.0" height="2.6" fill="#333"/><rect x="668.2" y="211.0" width="3.0" height="85.0" fill="#333"/><rect x="715.5" y="223.0" width="2.0" height="70.5" fill="#333"/><path d="M671.0 294.5L729.0 294.5" stroke="#b0b0b0" stroke-width="2"/><rect x="486.5" y="208.0" width="17.2" height="16.5" fill="#3a3a3a"/><rect x="604.2" y="208.0" width="16.1" height="16.5" fill="#3a3a3a"/><rect x="715.5" y="208.0" width="16.7" height="15.3" fill="#3a3a3a"/><path d="M504.0 213.5L603.0 213.5" stroke="#b5b5b5" stroke-width="2.5"/><path d="M620.5 212.5L668.0 212.5" stroke="#b5b5b5" stroke-width="1.5"/><path d="M620.5 215.0L668.0 215.0" stroke="#333" stroke-width="1.3"/><rect x="603.2" y="224.0" width="3.0" height="47.5" fill="#b8b8b8"/><path d="M512.7 215.0L512.7 271.0" stroke="#b0b0b0" stroke-width="2.2"/><path d="M542.0 216.0L542.0 242.0" stroke="#c0c0c0" stroke-width="1"/><path d="M557.0 216.0L557.0 242.0" stroke="#c0c0c0" stroke-width="1"/><path d="M574.0 216.0L574.0 242.0" stroke="#c0c0c0" stroke-width="1"/><path d="M636.0 216.0L636.0 242.0" stroke="#c0c0c0" stroke-width="1"/><path d="M652.0 216.0L652.0 242.0" stroke="#c0c0c0" stroke-width="1"/><path d="M668.0 216.0L668.0 242.0" stroke="#c0c0c0" stroke-width="1"/><path d="M518 216l3 7 3-7z" stroke="#b8b8b8" stroke-width="1" fill="none"/><path d="M532 216l3 7 3-7z" stroke="#b8b8b8" stroke-width="1" fill="none"/><ellipse cx="549" cy="221" rx="3" ry="4" fill="none" stroke="#b8b8b8" stroke-width="1"/><ellipse cx="566" cy="221" rx="3" ry="4" fill="none" stroke="#b8b8b8" stroke-width="1"/><ellipse cx="628" cy="221" rx="3" ry="4" fill="none" stroke="#b8b8b8" stroke-width="1"/><ellipse cx="644" cy="221" rx="3" ry="4" fill="none" stroke="#b8b8b8" stroke-width="1"/><ellipse cx="660" cy="221" rx="3" ry="4" fill="none" stroke="#b8b8b8" stroke-width="1"/><circle cx="524.0" cy="265.5" r="3.8" fill="none" stroke="#b5b5b5" stroke-width="1"/><circle cx="544.0" cy="265.5" r="3.8" fill="none" stroke="#b5b5b5" stroke-width="1"/><circle cx="564.0" cy="265.5" r="3.8" fill="none" stroke="#b5b5b5" stroke-width="1"/><circle cx="640.0" cy="265.5" r="3.8" fill="none" stroke="#b5b5b5" stroke-width="1"/><circle cx="659.0" cy="265.5" r="3.8" fill="none" stroke="#b5b5b5" stroke-width="1"/><path d="M513.0 259.5L574.0 259.5" stroke="#c8c8c8" stroke-width="1"/><rect x="574.0" y="260.0" width="1.5" height="11.5" fill="#333"/><path d="M585 271.5A16 16 0 0 1 600.5 254.5V271.5" stroke="#333" stroke-width="0.9" fill="none"/><path d="M608.5 271.5V254.5A16 16 0 0 1 623 271.5" stroke="#333" stroke-width="0.9" fill="none"/><path d="M552 242A14 14 0 0 1 558 232" stroke="#c0c0c0" stroke-width="0.9" fill="none"/><path d="M536 242A14 14 0 0 1 542 232" stroke="#c0c0c0" stroke-width="0.9" fill="none"/><path d="M673.0 231.7L714.0 231.7" stroke="#888" stroke-width="1"/><path d="M673.0 236.5L714.0 236.5" stroke="#888" stroke-width="1"/><path d="M673.0 241.3L714.0 241.3" stroke="#888" stroke-width="1"/><path d="M673.0 246.1L714.0 246.1" stroke="#888" stroke-width="1"/><path d="M673.0 250.9L714.0 250.9" stroke="#888" stroke-width="1"/><path d="M673.0 255.7L714.0 255.7" stroke="#888" stroke-width="1"/><path d="M673.0 260.5L714.0 260.5" stroke="#888" stroke-width="1"/><path d="M673.0 265.3L714.0 265.3" stroke="#888" stroke-width="1"/><rect x="690.5" y="228.5" width="5.5" height="40" rx="2.7" fill="#fff" stroke="#6a6a6a" stroke-width="1.4"/><path d="M681.5 241.5V226.5H705.5V265" stroke="#777" stroke-width="0.9" fill="none"/><path d="M672.5 226.0L672.5 276.0" stroke="#999" stroke-width="1.8"/><path d="M714.0 222.0L714.0 270.0" stroke="#999" stroke-width="2"/><path d="M672.5 277A17 17 0 0 1 689 294" stroke="#333" stroke-width="0.9" fill="none"/><rect x="489.5" y="273.8" width="12.0" height="67.9" fill="#bababa"/><path d="M489.5 294.0L501.5 294.0" stroke="#dedede" stroke-width="1.2"/><path d="M489.5 317.3L501.5 317.3" stroke="#dedede" stroke-width="1.2"/><rect x="523.5" y="305.5" width="22.5" height="36.0" fill="none" stroke="#c4c4c4" stroke-width="1"/><rect x="568.0" y="297.2" width="11.0" height="44.5" fill="#bababa"/><path d="M568.0 317.3L579.0 317.3" stroke="#dedede" stroke-width="1.2"/><rect x="487.0" y="342.0" width="133.8" height="2.4" fill="#333"/><rect x="682.0" y="342.0" width="50.4" height="2.6" fill="#333"/><rect x="487.0" y="342.0" width="16.7" height="16.6" fill="#3a3a3a"/><rect x="604.2" y="342.0" width="16.6" height="16.6" fill="#3a3a3a"/><rect x="715.6" y="342.0" width="13.6" height="16.2" fill="#3a3a3a"/><rect x="603.8" y="342.0" width="2.2" height="66.5" fill="#333"/><rect x="486.5" y="406.2" width="119.5" height="2.8" fill="#333"/><rect x="518" y="364.4" width="56" height="27.8" rx="2" fill="none" stroke="#c4c4c4" stroke-width="1"/><rect x="522.3" y="360.6" width="8.4" height="8.4" rx="2.5" fill="none" stroke="#b0b0b0" stroke-width="0.9"/><rect x="522.3" y="388.0" width="8.4" height="8.4" rx="2.5" fill="none" stroke="#b0b0b0" stroke-width="0.9"/><rect x="540.8" y="360.6" width="8.4" height="8.4" rx="2.5" fill="none" stroke="#b0b0b0" stroke-width="0.9"/><rect x="540.8" y="388.0" width="8.4" height="8.4" rx="2.5" fill="none" stroke="#b0b0b0" stroke-width="0.9"/><rect x="559.8" y="360.6" width="8.4" height="8.4" rx="2.5" fill="none" stroke="#b0b0b0" stroke-width="0.9"/><rect x="559.8" y="388.0" width="8.4" height="8.4" rx="2.5" fill="none" stroke="#b0b0b0" stroke-width="0.9"/><rect x="513.0" y="374.1" width="8.4" height="8.4" rx="2.5" fill="none" stroke="#b0b0b0" stroke-width="0.9"/><rect x="569.6" y="374.1" width="8.4" height="8.4" rx="2.5" fill="none" stroke="#b0b0b0" stroke-width="0.9"/><rect x="593.2" y="345.8" width="9.5" height="32.0" fill="none" stroke="#c4c4c4" stroke-width="1"/><path d="M585.5 407A17 17 0 0 1 602 390.5V407" stroke="#333" stroke-width="0.9" fill="none"/><rect x="607.0" y="360.4" width="8.0" height="43.0" fill="#bababa"/><path d="M607.0 384.0L615.0 384.0" stroke="#dedede" stroke-width="1.2"/><rect x="633.5" y="359.1" width="16.3" height="93.4" fill="none" stroke="#c4c4c4" stroke-width="1"/><rect x="621.5" y="365.0" width="9.0" height="9.0" rx="2.7" fill="none" stroke="#b0b0b0" stroke-width="0.9"/><rect x="621.5" y="381.5" width="9.0" height="9.0" rx="2.7" fill="none" stroke="#b0b0b0" stroke-width="0.9"/><rect x="621.5" y="435.1" width="9.0" height="9.0" rx="2.7" fill="none" stroke="#b0b0b0" stroke-width="0.9"/><path d="M663.5 476A16 16 0 0 1 678.5 460V476" stroke="#333" stroke-width="0.9" fill="none"/><path d="M683.0 344.0L683.0 476.0" stroke="#888" stroke-width="1"/><path d="M686.0 344.0L686.0 476.0" stroke="#888" stroke-width="1"/><rect x="687" y="361" width="33.5" height="40.30000000000001" fill="none" stroke="#555" stroke-width="1"/><path d="M688.5 362.5L719 399.8M719 362.5L688.5 399.8" stroke="#666" stroke-width="0.7" fill="none"/><rect x="687" y="408" width="33.5" height="41.5" fill="none" stroke="#555" stroke-width="1"/><path d="M688.5 409.5L719 448.0M719 409.5L688.5 448.0" stroke="#666" stroke-width="0.7" fill="none"/><path d="M686.0 405.0L720.0 405.0" stroke="#888" stroke-width="1"/><path d="M686.0 453.0L720.0 453.0" stroke="#888" stroke-width="1"/><rect x="453.9" y="406.2" width="151.9" height="2.4" fill="#333"/><rect x="454.3" y="406.2" width="2.9" height="277.8" fill="#333"/><rect x="574.2" y="408.6" width="2.1" height="66.9" fill="#333"/><rect x="483" y="429.4" width="56.7" height="28" rx="2" fill="none" stroke="#c4c4c4" stroke-width="1"/><rect x="486.8" y="425.4" width="8.4" height="8.4" rx="2.5" fill="none" stroke="#b0b0b0" stroke-width="0.9"/><rect x="486.8" y="453.2" width="8.4" height="8.4" rx="2.5" fill="none" stroke="#b0b0b0" stroke-width="0.9"/><rect x="505.8" y="425.4" width="8.4" height="8.4" rx="2.5" fill="none" stroke="#b0b0b0" stroke-width="0.9"/><rect x="505.8" y="453.2" width="8.4" height="8.4" rx="2.5" fill="none" stroke="#b0b0b0" stroke-width="0.9"/><rect x="524.8" y="425.4" width="8.4" height="8.4" rx="2.5" fill="none" stroke="#b0b0b0" stroke-width="0.9"/><rect x="524.8" y="453.2" width="8.4" height="8.4" rx="2.5" fill="none" stroke="#b0b0b0" stroke-width="0.9"/><rect x="478.0" y="439.2" width="8.4" height="8.4" rx="2.5" fill="none" stroke="#b0b0b0" stroke-width="0.9"/><rect x="535.4" y="439.2" width="8.4" height="8.4" rx="2.5" fill="none" stroke="#b0b0b0" stroke-width="0.9"/><path d="M557.5 413.5A17 17 0 0 0 574 430.5" stroke="#333" stroke-width="0.9" fill="none"/><path d="M557.5 413.5L574.0 413.5" stroke="#333" stroke-width="0.9"/><rect x="563.0" y="442.4" width="10.5" height="32.6" fill="#bababa"/><path d="M563.0 458.5L573.5 458.5" stroke="#dedede" stroke-width="1.2"/><rect x="576.3" y="431.2" width="8.2" height="22.6" fill="#bababa"/><path d="M577 460A17 17 0 0 1 594 476" stroke="#333" stroke-width="0.9" fill="none"/><rect x="453.9" y="475.4" width="502.0" height="3.2" fill="#333"/><rect x="952.6" y="478.0" width="3.3" height="119.0" fill="#333"/><path d="M954.2 597A110 112 0 0 1 845 709" stroke="#333" stroke-width="3.2" fill="none"/><rect x="482.0" y="707.5" width="363.5" height="2.8" fill="#333"/><path d="M455.8 683A27 27 0 0 0 482.3 709" stroke="#333" stroke-width="3.2" fill="none"/><rect x="486.6" y="478.2" width="17.2" height="14.3" fill="#3a3a3a"/><path d="M486.6 479.5L503.8 479.5" stroke="#cfcfcf" stroke-width="0.8"/><rect x="604.3" y="478.2" width="16.5" height="14.3" fill="#3a3a3a"/><path d="M604.3 479.5L620.8 479.5" stroke="#cfcfcf" stroke-width="0.8"/><rect x="715.3" y="478.2" width="17.1" height="14.3" fill="#3a3a3a"/><path d="M715.3 479.5L732.4 479.5" stroke="#cfcfcf" stroke-width="0.8"/><rect x="827.0" y="478.2" width="16.7" height="14.3" fill="#3a3a3a"/><path d="M827.0 479.5L843.7 479.5" stroke="#cfcfcf" stroke-width="0.8"/><rect x="938.8" y="478.2" width="16.2" height="14.3" fill="#3a3a3a"/><path d="M938.8 479.5L955.0 479.5" stroke="#cfcfcf" stroke-width="0.8"/><rect x="486.6" y="694.0" width="17.2" height="15.8" fill="#3a3a3a"/><rect x="604.3" y="694.0" width="16.5" height="15.8" fill="#3a3a3a"/><rect x="715.5" y="694.0" width="16.7" height="15.8" fill="#3a3a3a"/><rect x="827.2" y="694.0" width="16.4" height="15.8" fill="#3a3a3a"/><rect x="457.9" y="498.4" width="9.0" height="111.6" fill="#bababa"/><path d="M457.9 526.0L466.9 526.0" stroke="#dedede" stroke-width="1.2"/><path d="M457.9 549.0L466.9 549.0" stroke="#dedede" stroke-width="1.2"/><path d="M457.9 572.0L466.9 572.0" stroke="#dedede" stroke-width="1.2"/><path d="M457.9 595.0L466.9 595.0" stroke="#dedede" stroke-width="1.2"/><rect x="486.8" y="512.7" width="22.0" height="22.0" fill="none" stroke="#c4c4c4" stroke-width="1"/><path d="M486.3 523.7L509.3 523.7" stroke="#d0d0d0" stroke-width="1"/><rect x="491.2" y="502.4" width="9.2" height="9.2" rx="2.8" fill="none" stroke="#b0b0b0" stroke-width="0.9"/><rect x="498.2" y="535.1" width="9.2" height="9.2" rx="2.8" fill="none" stroke="#b0b0b0" stroke-width="0.9"/><rect x="486.8" y="557.0" width="22.0" height="22.0" fill="none" stroke="#c4c4c4" stroke-width="1"/><path d="M486.3 568.0L509.3 568.0" stroke="#d0d0d0" stroke-width="1"/><rect x="491.2" y="546.7" width="9.2" height="9.2" rx="2.8" fill="none" stroke="#b0b0b0" stroke-width="0.9"/><rect x="498.2" y="579.4" width="9.2" height="9.2" rx="2.8" fill="none" stroke="#b0b0b0" stroke-width="0.9"/><rect x="529.0" y="512.7" width="22.0" height="22.0" fill="none" stroke="#c4c4c4" stroke-width="1"/><path d="M528.5 523.7L551.5 523.7" stroke="#d0d0d0" stroke-width="1"/><rect x="533.4" y="502.4" width="9.2" height="9.2" rx="2.8" fill="none" stroke="#b0b0b0" stroke-width="0.9"/><rect x="540.4" y="535.1" width="9.2" height="9.2" rx="2.8" fill="none" stroke="#b0b0b0" stroke-width="0.9"/><rect x="529.0" y="557.0" width="22.0" height="22.0" fill="none" stroke="#c4c4c4" stroke-width="1"/><path d="M528.5 568.0L551.5 568.0" stroke="#d0d0d0" stroke-width="1"/><rect x="533.4" y="546.7" width="9.2" height="9.2" rx="2.8" fill="none" stroke="#b0b0b0" stroke-width="0.9"/><rect x="540.4" y="579.4" width="9.2" height="9.2" rx="2.8" fill="none" stroke="#b0b0b0" stroke-width="0.9"/><rect x="529.0" y="601.5" width="22.0" height="22.0" fill="none" stroke="#c4c4c4" stroke-width="1"/><path d="M528.5 612.5L551.5 612.5" stroke="#d0d0d0" stroke-width="1"/><rect x="533.4" y="591.2" width="9.2" height="9.2" rx="2.8" fill="none" stroke="#b0b0b0" stroke-width="0.9"/><rect x="540.4" y="623.9" width="9.2" height="9.2" rx="2.8" fill="none" stroke="#b0b0b0" stroke-width="0.9"/><rect x="573.8" y="512.7" width="22.0" height="22.0" fill="none" stroke="#c4c4c4" stroke-width="1"/><path d="M573.3 523.7L596.3 523.7" stroke="#d0d0d0" stroke-width="1"/><rect x="578.2" y="502.4" width="9.2" height="9.2" rx="2.8" fill="none" stroke="#b0b0b0" stroke-width="0.9"/><rect x="585.2" y="535.1" width="9.2" height="9.2" rx="2.8" fill="none" stroke="#b0b0b0" stroke-width="0.9"/><rect x="573.8" y="557.0" width="22.0" height="22.0" fill="none" stroke="#c4c4c4" stroke-width="1"/><path d="M573.3 568.0L596.3 568.0" stroke="#d0d0d0" stroke-width="1"/><rect x="578.2" y="546.7" width="9.2" height="9.2" rx="2.8" fill="none" stroke="#b0b0b0" stroke-width="0.9"/><rect x="585.2" y="579.4" width="9.2" height="9.2" rx="2.8" fill="none" stroke="#b0b0b0" stroke-width="0.9"/><rect x="573.8" y="601.5" width="22.0" height="22.0" fill="none" stroke="#c4c4c4" stroke-width="1"/><path d="M573.3 612.5L596.3 612.5" stroke="#d0d0d0" stroke-width="1"/><rect x="578.2" y="591.2" width="9.2" height="9.2" rx="2.8" fill="none" stroke="#b0b0b0" stroke-width="0.9"/><rect x="585.2" y="623.9" width="9.2" height="9.2" rx="2.8" fill="none" stroke="#b0b0b0" stroke-width="0.9"/><rect x="651.4" y="512.7" width="22.0" height="22.0" fill="none" stroke="#c4c4c4" stroke-width="1"/><path d="M650.9 523.7L673.9 523.7" stroke="#d0d0d0" stroke-width="1"/><rect x="655.8" y="502.4" width="9.2" height="9.2" rx="2.8" fill="none" stroke="#b0b0b0" stroke-width="0.9"/><rect x="662.8" y="535.1" width="9.2" height="9.2" rx="2.8" fill="none" stroke="#b0b0b0" stroke-width="0.9"/><rect x="651.4" y="557.0" width="22.0" height="22.0" fill="none" stroke="#c4c4c4" stroke-width="1"/><path d="M650.9 568.0L673.9 568.0" stroke="#d0d0d0" stroke-width="1"/><rect x="655.8" y="546.7" width="9.2" height="9.2" rx="2.8" fill="none" stroke="#b0b0b0" stroke-width="0.9"/><rect x="662.8" y="579.4" width="9.2" height="9.2" rx="2.8" fill="none" stroke="#b0b0b0" stroke-width="0.9"/><rect x="651.4" y="601.5" width="22.0" height="22.0" fill="none" stroke="#c4c4c4" stroke-width="1"/><path d="M650.9 612.5L673.9 612.5" stroke="#d0d0d0" stroke-width="1"/><rect x="655.8" y="591.2" width="9.2" height="9.2" rx="2.8" fill="none" stroke="#b0b0b0" stroke-width="0.9"/><rect x="662.8" y="623.9" width="9.2" height="9.2" rx="2.8" fill="none" stroke="#b0b0b0" stroke-width="0.9"/><path d="M618.5 495.0L618.5 709.0" stroke="#aaa" stroke-width="1"/><path d="M620.5 512.0L620.5 709.0" stroke="#aaa" stroke-width="1"/><path d="M603.5 495.5A17 17 0 0 0 620 512" stroke="#333" stroke-width="0.9" fill="none"/><path d="M603.5 495.5L620.0 495.5" stroke="#555" stroke-width="0.9"/><rect x="621.8" y="514.9" width="7.2" height="127.1" fill="#bababa"/><path d="M621.8 538.0L629.0 538.0" stroke="#dedede" stroke-width="1.2"/><path d="M621.8 561.0L629.0 561.0" stroke="#dedede" stroke-width="1.2"/><path d="M621.8 584.0L629.0 584.0" stroke="#dedede" stroke-width="1.2"/><path d="M621.8 607.0L629.0 607.0" stroke="#dedede" stroke-width="1.2"/><path d="M621.8 630.0L629.0 630.0" stroke="#dedede" stroke-width="1.2"/><rect x="457.0" y="611.2" width="46.8" height="2.3" fill="#333"/><rect x="501.0" y="611.2" width="2.8" height="97.8" fill="#333"/><path d="M457.5 643.0L500.5 643.0" stroke="#888" stroke-width="1"/><path d="M457.5 647.9L500.5 647.9" stroke="#888" stroke-width="1"/><path d="M457.5 652.8L500.5 652.8" stroke="#888" stroke-width="1"/><path d="M457.5 657.7L500.5 657.7" stroke="#888" stroke-width="1"/><path d="M457.5 662.6L500.5 662.6" stroke="#888" stroke-width="1"/><path d="M457.5 667.5L500.5 667.5" stroke="#888" stroke-width="1"/><path d="M457.5 672.4L500.5 672.4" stroke="#888" stroke-width="1"/><path d="M457.5 677.3L500.5 677.3" stroke="#888" stroke-width="1"/><rect x="477" y="640.5" width="5" height="40" rx="2.5" fill="#fff" stroke="#6a6a6a" stroke-width="1.4"/><path d="M467.5 644V682.5H491V666.5" stroke="#777" stroke-width="0.9" fill="none"/><path d="M481 613.5A17 17 0 0 0 497.5 629.5V613.5" stroke="#333" stroke-width="0.9" fill="none"/><rect x="505.3" y="661.0" width="10.3" height="21.5" fill="#bababa"/><path d="M505.3 664.0L515.6 664.0" stroke="#dedede" stroke-width="1"/><path d="M521 705.5V700h8v-8h8v-8h12v21.5z" stroke="none" stroke-width="0" fill="#bababa"/><rect x="540.5" y="683.0" width="9.0" height="22.5" fill="#bababa"/><rect x="521.0" y="677.5" width="10.0" height="10.0" rx="3.0" fill="none" stroke="#b0b0b0" stroke-width="0.9"/><rect x="525.7" y="664.7" width="8.6" height="8.6" rx="2.6" fill="none" stroke="#b0b0b0" stroke-width="0.9"/><rect x="554.5" y="688.0" width="9.0" height="9.0" rx="2.7" fill="none" stroke="#b0b0b0" stroke-width="0.9"/><path d="M549.7 660.5L549.7 706.0" stroke="#c4c4c4" stroke-width="1"/><path d="M568.4 660.3L618.0 660.3" stroke="#c4c4c4" stroke-width="1.5"/><rect x="573.2" y="674.0" width="11.0" height="13.6" fill="#bababa"/><path d="M573.2 687.6h11v6h19.5v13.3h-30.5z" stroke="none" stroke-width="0" fill="#bababa"/><rect x="590.0" y="678.5" width="10.0" height="10.0" rx="3.0" fill="none" stroke="#b0b0b0" stroke-width="0.9"/><rect x="610.0" y="661.5" width="7.0" height="31.0" fill="none" stroke="#c4c4c4" stroke-width="1"/><path d="M505.0 705.5L604.0 705.5" stroke="#c0c0c0" stroke-width="1.5"/><path d="M621.0 705.5L827.0 705.5" stroke="#c0c0c0" stroke-width="1.5"/><rect x="734.3" y="481.0" width="29.0" height="10.5" fill="#bababa"/><rect x="734.3" y="481.0" width="12.5" height="22.0" fill="#bababa"/><rect x="768.3" y="503.2" width="23.5" height="22.4" fill="#bababa"/><path d="M779.8 503.0L779.8 525.6" stroke="#e0e0e0" stroke-width="1.2"/><rect x="797.0" y="481.0" width="28.8" height="10.5" fill="#bababa"/><rect x="813.3" y="481.0" width="12.5" height="22.0" fill="#bababa"/><path d="M746.8 503V496L751.3 491.5H763.3L768.3 496.5V525.6" stroke="#c8c8c8" stroke-width="0.9" fill="none"/><path d="M813.3 503V496L808.8 491.5H797.0L791.8 496.5V525.6" stroke="#c8c8c8" stroke-width="0.9" fill="none"/><circle cx="756.8" cy="501.0" r="5.6" fill="none" stroke="#a8a8a8" stroke-width="1"/><circle cx="756.8" cy="501.0" r="3.9999999999999996" fill="none" stroke="#d0d0d0" stroke-width="0.8"/><circle cx="803.3" cy="501.0" r="5.6" fill="none" stroke="#a8a8a8" stroke-width="1"/><circle cx="803.3" cy="501.0" r="3.9999999999999996" fill="none" stroke="#d0d0d0" stroke-width="0.8"/><rect x="736.0" y="509.7" width="8.6" height="8.6" rx="2.6" fill="none" stroke="#b0b0b0" stroke-width="0.9"/><rect x="816.0" y="509.7" width="8.6" height="8.6" rx="2.6" fill="none" stroke="#b0b0b0" stroke-width="0.9"/><path d="M734.3 480.0L734.3 525.6" stroke="#c4c4c4" stroke-width="1"/><path d="M779.8 480.0L779.8 525.6" stroke="#c4c4c4" stroke-width="1"/><path d="M825.8 480.0L825.8 525.6" stroke="#c4c4c4" stroke-width="1"/><path d="M734.3 480.3L825.8 480.3" stroke="#cdcdcd" stroke-width="1"/><rect x="845.5" y="481.0" width="29.0" height="10.5" fill="#bababa"/><rect x="845.5" y="481.0" width="12.5" height="22.0" fill="#bababa"/><rect x="879.5" y="503.2" width="23.5" height="22.4" fill="#bababa"/><path d="M891.0 503.0L891.0 525.6" stroke="#e0e0e0" stroke-width="1.2"/><rect x="908.2" y="481.0" width="28.8" height="10.5" fill="#bababa"/><rect x="924.5" y="481.0" width="12.5" height="22.0" fill="#bababa"/><path d="M858.0 503V496L862.5 491.5H874.5L879.5 496.5V525.6" stroke="#c8c8c8" stroke-width="0.9" fill="none"/><path d="M924.5 503V496L920.0 491.5H908.2L903.0 496.5V525.6" stroke="#c8c8c8" stroke-width="0.9" fill="none"/><circle cx="868.0" cy="501.0" r="5.6" fill="none" stroke="#a8a8a8" stroke-width="1"/><circle cx="868.0" cy="501.0" r="3.9999999999999996" fill="none" stroke="#d0d0d0" stroke-width="0.8"/><circle cx="914.5" cy="501.0" r="5.6" fill="none" stroke="#a8a8a8" stroke-width="1"/><circle cx="914.5" cy="501.0" r="3.9999999999999996" fill="none" stroke="#d0d0d0" stroke-width="0.8"/><rect x="847.2" y="509.7" width="8.6" height="8.6" rx="2.6" fill="none" stroke="#b0b0b0" stroke-width="0.9"/><rect x="927.2" y="509.7" width="8.6" height="8.6" rx="2.6" fill="none" stroke="#b0b0b0" stroke-width="0.9"/><path d="M845.5 480.0L845.5 525.6" stroke="#c4c4c4" stroke-width="1"/><path d="M891.0 480.0L891.0 525.6" stroke="#c4c4c4" stroke-width="1"/><path d="M937.0 480.0L937.0 525.6" stroke="#c4c4c4" stroke-width="1"/><path d="M845.5 480.3L937.0 480.3" stroke="#cdcdcd" stroke-width="1"/><path d="M688.8 547.3L734.6 547.3" stroke="#b8b8b8" stroke-width="1.5"/><path d="M688.8 638.6L734.6 638.6" stroke="#b8b8b8" stroke-width="1.5"/><path d="M688.8 592.8L926.0 592.8" stroke="#c4c4c4" stroke-width="1.2"/><path d="M733.7 547.0L733.7 640.0" stroke="#c4c4c4" stroke-width="1.3"/><path d="M825.0 547.0L825.0 640.0" stroke="#c4c4c4" stroke-width="1.3"/><path d="M916.4 547.0L916.4 640.0" stroke="#c4c4c4" stroke-width="1.3"/><rect x="688.8" y="581.5" width="22.6" height="23.2" fill="#bababa"/><path d="M688.8 594.0L711.4 594.0" stroke="#dedede" stroke-width="1.5"/><rect x="711.4" y="548.8" width="22.0" height="10.7" fill="#bababa"/><rect x="722.7" y="548.8" width="10.7" height="22.0" fill="#bababa"/><rect x="711.4" y="627.5" width="22.0" height="10.7" fill="#bababa"/><rect x="722.7" y="616.2" width="10.7" height="22.0" fill="#bababa"/><path d="M704 566.8L709.8 561L718.2 561L724 566.8L724 575.2L718.2 581L709.8 581L704 575.2z" stroke="#d4d4d4" stroke-width="0.8" fill="none"/><path d="M704 609.8L709.8 604L718.2 604L724 609.8L724 618.2L718.2 624L709.8 624L704 618.2z" stroke="#d4d4d4" stroke-width="0.8" fill="none"/><circle cx="713.0" cy="570.5" r="5.6" fill="none" stroke="#a8a8a8" stroke-width="1"/><circle cx="713.0" cy="570.5" r="3.9999999999999996" fill="none" stroke="#d0d0d0" stroke-width="0.8"/><circle cx="713.0" cy="615.0" r="5.6" fill="none" stroke="#a8a8a8" stroke-width="1"/><circle cx="713.0" cy="615.0" r="3.9999999999999996" fill="none" stroke="#d0d0d0" stroke-width="0.8"/><rect x="695.5" y="551.5" width="9.0" height="9.0" rx="2.7" fill="none" stroke="#b0b0b0" stroke-width="0.9"/><rect x="695.5" y="627.5" width="9.0" height="9.0" rx="2.7" fill="none" stroke="#b0b0b0" stroke-width="0.9"/><rect x="734.5" y="570.2" width="10.5" height="45.8" fill="#bababa"/><rect x="734.5" y="581.5" width="22.0" height="23.2" fill="#bababa"/><rect x="756.5" y="587.0" width="5.5" height="12.0" fill="#bababa"/><path d="M744.5 566.8L750.3 561L758.7 561L764.5 566.8L764.5 575.2L758.7 581L750.3 581L744.5 575.2z" stroke="#d4d4d4" stroke-width="0.8" fill="none"/><path d="M744.5 609.8L750.3 604L758.7 604L764.5 609.8L764.5 618.2L758.7 624L750.3 624L744.5 618.2z" stroke="#d4d4d4" stroke-width="0.8" fill="none"/><circle cx="754.5" cy="570.5" r="5.6" fill="none" stroke="#a8a8a8" stroke-width="1"/><circle cx="754.5" cy="570.5" r="3.9999999999999996" fill="none" stroke="#d0d0d0" stroke-width="0.8"/><circle cx="754.5" cy="615.0" r="5.6" fill="none" stroke="#a8a8a8" stroke-width="1"/><circle cx="754.5" cy="615.0" r="3.9999999999999996" fill="none" stroke="#d0d0d0" stroke-width="0.8"/><rect x="814.0" y="570.2" width="10.5" height="45.8" fill="#bababa"/><rect x="802.5" y="581.5" width="22.0" height="23.2" fill="#bababa"/><rect x="797.0" y="587.0" width="5.5" height="12.0" fill="#bababa"/><path d="M794.5 566.8L800.3 561L808.7 561L814.5 566.8L814.5 575.2L808.7 581L800.3 581L794.5 575.2z" stroke="#d4d4d4" stroke-width="0.8" fill="none"/><path d="M794.5 609.8L800.3 604L808.7 604L814.5 609.8L814.5 618.2L808.7 624L800.3 624L794.5 618.2z" stroke="#d4d4d4" stroke-width="0.8" fill="none"/><circle cx="804.5" cy="570.5" r="5.6" fill="none" stroke="#a8a8a8" stroke-width="1"/><circle cx="804.5" cy="570.5" r="3.9999999999999996" fill="none" stroke="#d0d0d0" stroke-width="0.8"/><circle cx="804.5" cy="615.0" r="5.6" fill="none" stroke="#a8a8a8" stroke-width="1"/><circle cx="804.5" cy="615.0" r="3.9999999999999996" fill="none" stroke="#d0d0d0" stroke-width="0.8"/><rect x="768.0" y="548.2" width="23.8" height="22.0" fill="#bababa"/><rect x="768.0" y="616.0" width="23.8" height="22.2" fill="#bababa"/><path d="M779.5 570.0L779.5 616.0" stroke="#c4c4c4" stroke-width="1.2"/><path d="M768.0 594.0L791.8 594.0" stroke="#dedede" stroke-width="1"/><rect x="826.3" y="570.2" width="10.5" height="45.8" fill="#bababa"/><rect x="826.3" y="581.5" width="22.0" height="23.2" fill="#bababa"/><rect x="848.3" y="587.0" width="5.5" height="12.0" fill="#bababa"/><path d="M836.3 566.8L842.0999999999999 561L850.5 561L856.3 566.8L856.3 575.2L850.5 581L842.0999999999999 581L836.3 575.2z" stroke="#d4d4d4" stroke-width="0.8" fill="none"/><path d="M836.3 609.8L842.0999999999999 604L850.5 604L856.3 609.8L856.3 618.2L850.5 624L842.0999999999999 624L836.3 618.2z" stroke="#d4d4d4" stroke-width="0.8" fill="none"/><circle cx="846.3" cy="570.5" r="5.6" fill="none" stroke="#a8a8a8" stroke-width="1"/><circle cx="846.3" cy="570.5" r="3.9999999999999996" fill="none" stroke="#d0d0d0" stroke-width="0.8"/><circle cx="846.3" cy="615.0" r="5.6" fill="none" stroke="#a8a8a8" stroke-width="1"/><circle cx="846.3" cy="615.0" r="3.9999999999999996" fill="none" stroke="#d0d0d0" stroke-width="0.8"/><rect x="905.8" y="570.2" width="10.5" height="45.8" fill="#bababa"/><rect x="894.3" y="581.5" width="22.0" height="23.2" fill="#bababa"/><rect x="888.8" y="587.0" width="5.5" height="12.0" fill="#bababa"/><path d="M886.3 566.8L892.0999999999999 561L900.5 561L906.3 566.8L906.3 575.2L900.5 581L892.0999999999999 581L886.3 575.2z" stroke="#d4d4d4" stroke-width="0.8" fill="none"/><path d="M886.3 609.8L892.0999999999999 604L900.5 604L906.3 609.8L906.3 618.2L900.5 624L892.0999999999999 624L886.3 618.2z" stroke="#d4d4d4" stroke-width="0.8" fill="none"/><circle cx="896.3" cy="570.5" r="5.6" fill="none" stroke="#a8a8a8" stroke-width="1"/><circle cx="896.3" cy="570.5" r="3.9999999999999996" fill="none" stroke="#d0d0d0" stroke-width="0.8"/><circle cx="896.3" cy="615.0" r="5.6" fill="none" stroke="#a8a8a8" stroke-width="1"/><circle cx="896.3" cy="615.0" r="3.9999999999999996" fill="none" stroke="#d0d0d0" stroke-width="0.8"/><rect x="859.8" y="548.2" width="23.8" height="22.0" fill="#bababa"/><rect x="859.8" y="616.0" width="23.8" height="22.2" fill="#bababa"/><path d="M871.3 570.0L871.3 616.0" stroke="#c4c4c4" stroke-width="1.2"/><path d="M859.8 594.0L883.6 594.0" stroke="#dedede" stroke-width="1"/><rect x="918.2" y="554.4" width="8.1" height="80.6" fill="#bababa"/><path d="M918.2 578.0L926.3 578.0" stroke="#dedede" stroke-width="1"/><path d="M918.2 600.0L926.3 600.0" stroke="#dedede" stroke-width="1"/><rect x="736.5" y="551.0" width="9.0" height="9.0" rx="2.7" fill="none" stroke="#b0b0b0" stroke-width="0.9"/><rect x="736.5" y="627.5" width="9.0" height="9.0" rx="2.7" fill="none" stroke="#b0b0b0" stroke-width="0.9"/><rect x="813.5" y="551.0" width="9.0" height="9.0" rx="2.7" fill="none" stroke="#b0b0b0" stroke-width="0.9"/><rect x="813.5" y="627.5" width="9.0" height="9.0" rx="2.7" fill="none" stroke="#b0b0b0" stroke-width="0.9"/><rect x="827.5" y="551.0" width="9.0" height="9.0" rx="2.7" fill="none" stroke="#b0b0b0" stroke-width="0.9"/><rect x="827.5" y="627.5" width="9.0" height="9.0" rx="2.7" fill="none" stroke="#b0b0b0" stroke-width="0.9"/><rect x="904.5" y="551.0" width="9.0" height="9.0" rx="2.7" fill="none" stroke="#b0b0b0" stroke-width="0.9"/><rect x="904.5" y="627.5" width="9.0" height="9.0" rx="2.7" fill="none" stroke="#b0b0b0" stroke-width="0.9"/><rect x="622.0" y="683.0" width="12.0" height="22.5" fill="#bababa"/><rect x="622.0" y="690.0" width="29.0" height="15.5" fill="#bababa"/><rect x="622.0" y="684.0" width="12.0" height="3.0" fill="#d0d0d0"/><rect x="655.5" y="660.4" width="24.0" height="21.7" fill="#bababa"/><path d="M667.5 660.4L667.5 705.5" stroke="#c4c4c4" stroke-width="1.2"/><path d="M655.5 663.5L679.5 663.5" stroke="#dedede" stroke-width="1.2"/><rect x="683.0" y="690.0" width="30.0" height="15.5" fill="#bababa"/><rect x="700.0" y="683.0" width="13.0" height="22.5" fill="#bababa"/><path d="M634 678.8L639.8 673L648.2 673L654 678.8L654 687.2L648.2 693L639.8 693L634 687.2z" stroke="#d4d4d4" stroke-width="0.8" fill="none"/><path d="M680.5 678.8L686.3 673L694.7 673L700.5 678.8L700.5 687.2L694.7 693L686.3 693L680.5 687.2z" stroke="#d4d4d4" stroke-width="0.8" fill="none"/><circle cx="644.0" cy="683.0" r="5.6" fill="none" stroke="#a8a8a8" stroke-width="1"/><circle cx="644.0" cy="683.0" r="3.9999999999999996" fill="none" stroke="#d0d0d0" stroke-width="0.8"/><circle cx="690.5" cy="683.0" r="5.6" fill="none" stroke="#a8a8a8" stroke-width="1"/><circle cx="690.5" cy="683.0" r="3.9999999999999996" fill="none" stroke="#d0d0d0" stroke-width="0.8"/><rect x="623.7" y="666.2" width="8.6" height="8.6" rx="2.6" fill="none" stroke="#b0b0b0" stroke-width="0.9"/><rect x="702.2" y="666.2" width="8.6" height="8.6" rx="2.6" fill="none" stroke="#b0b0b0" stroke-width="0.9"/><path d="M713.0 660.0L713.0 706.0" stroke="#c4c4c4" stroke-width="1.2"/><rect x="734.7" y="683.0" width="12.0" height="22.5" fill="#bababa"/><rect x="734.7" y="690.0" width="29.0" height="15.5" fill="#bababa"/><rect x="734.7" y="684.0" width="12.0" height="3.0" fill="#d0d0d0"/><rect x="768.2" y="660.4" width="24.0" height="21.7" fill="#bababa"/><path d="M780.2 660.4L780.2 705.5" stroke="#c4c4c4" stroke-width="1.2"/><path d="M768.2 663.5L792.2 663.5" stroke="#dedede" stroke-width="1.2"/><rect x="795.7" y="690.0" width="30.0" height="15.5" fill="#bababa"/><rect x="812.7" y="683.0" width="13.0" height="22.5" fill="#bababa"/><path d="M746.7 678.8L752.5 673L760.9000000000001 673L766.7 678.8L766.7 687.2L760.9000000000001 693L752.5 693L746.7 687.2z" stroke="#d4d4d4" stroke-width="0.8" fill="none"/><path d="M793.2 678.8L799.0 673L807.4000000000001 673L813.2 678.8L813.2 687.2L807.4000000000001 693L799.0 693L793.2 687.2z" stroke="#d4d4d4" stroke-width="0.8" fill="none"/><circle cx="756.7" cy="683.0" r="5.6" fill="none" stroke="#a8a8a8" stroke-width="1"/><circle cx="756.7" cy="683.0" r="3.9999999999999996" fill="none" stroke="#d0d0d0" stroke-width="0.8"/><circle cx="803.2" cy="683.0" r="5.6" fill="none" stroke="#a8a8a8" stroke-width="1"/><circle cx="803.2" cy="683.0" r="3.9999999999999996" fill="none" stroke="#d0d0d0" stroke-width="0.8"/><rect x="736.4" y="666.2" width="8.6" height="8.6" rx="2.6" fill="none" stroke="#b0b0b0" stroke-width="0.9"/><rect x="814.9" y="666.2" width="8.6" height="8.6" rx="2.6" fill="none" stroke="#b0b0b0" stroke-width="0.9"/><path d="M825.7 660.0L825.7 706.0" stroke="#c4c4c4" stroke-width="1.2"/><rect x="813.5" y="683.0" width="11.7" height="24.0" fill="#bababa"/><path d="M792 678.8L797.8 673L806.2 673L812 678.8L812 687.2L806.2 693L797.8 693L792 687.2z" stroke="#d4d4d4" stroke-width="0.8" fill="none"/><circle cx="802.0" cy="683.0" r="5.6" fill="none" stroke="#a8a8a8" stroke-width="1"/><circle cx="802.0" cy="683.0" r="3.9999999999999996" fill="none" stroke="#d0d0d0" stroke-width="0.8"/><rect x="813.7" y="665.7" width="8.6" height="8.6" rx="2.6" fill="none" stroke="#b0b0b0" stroke-width="0.9"/><path d="M825.3 660.0L825.3 706.0" stroke="#c4c4c4" stroke-width="1.2"/><rect x="890.0" y="666.7" width="9.2" height="9.2" rx="2.8" fill="none" stroke="#b0b0b0" stroke-width="0.9"/><rect x="884.9" y="679.1" width="9.2" height="9.2" rx="2.8" fill="none" stroke="#b0b0b0" stroke-width="0.9"/><rect x="872.5" y="684.2" width="9.2" height="9.2" rx="2.8" fill="none" stroke="#b0b0b0" stroke-width="0.9"/><rect x="860.1" y="679.1" width="9.2" height="9.2" rx="2.8" fill="none" stroke="#b0b0b0" stroke-width="0.9"/><rect x="855.0" y="666.7" width="9.2" height="9.2" rx="2.8" fill="none" stroke="#b0b0b0" stroke-width="0.9"/><rect x="860.1" y="654.3" width="9.2" height="9.2" rx="2.8" fill="none" stroke="#b0b0b0" stroke-width="0.9"/><rect x="872.5" y="649.2" width="9.2" height="9.2" rx="2.8" fill="none" stroke="#b0b0b0" stroke-width="0.9"/><rect x="884.9" y="654.3" width="9.2" height="9.2" rx="2.8" fill="none" stroke="#b0b0b0" stroke-width="0.9"/><rect x="486.6" y="694.0" width="17.2" height="15.8" fill="#3a3a3a"/><rect x="604.3" y="694.0" width="16.5" height="15.8" fill="#3a3a3a"/><rect x="715.5" y="694.0" width="16.7" height="15.8" fill="#3a3a3a"/><rect x="827.2" y="694.0" width="16.4" height="15.8" fill="#3a3a3a"/></svg><div class="t" style="left:1091px;top:186.5px;font-size:18.5px;color:#f4f4f4">Shape Da...</div>
<svg class="a" style="left:1200px;top:185px" width="54" height="18" viewBox="1200 185 54 18"><rect x="1203" y="188.5" width="10.5" height="9" fill="none" stroke="#f0f0f0" stroke-width="1"/><rect x="1203" y="188.5" width="10.5" height="2.5" fill="#f0f0f0"/><path d="M1235.5 189.5l7 7M1242.5 189.5l-7 7" stroke="#f0f0f0" stroke-width="1.2"/></svg>
<div class="t" style="left:1133px;top:264.5px;font-size:10.5px;color:#e6e6e6">No Shape Data</div>
<div class="a" style="left:1088px;top:336px;width:166px;height:1px;background:#555"></div>
<div class="t" style="left:1091px;top:354px;font-size:18.5px;color:#f4f4f4">Category ...</div>
<svg class="a" style="left:1200px;top:353px" width="54" height="18" viewBox="1200 353 54 18"><rect x="1203" y="356" width="10.5" height="9" fill="none" stroke="#f0f0f0" stroke-width="1"/><rect x="1203" y="356" width="10.5" height="2.5" fill="#f0f0f0"/><path d="M1235.5 357l7 7M1242.5 357l-7 7" stroke="#f0f0f0" stroke-width="1.2"/></svg>
<div class="a" style="left:1088.5px;top:379.5px;width:166px;height:344px;background:#fff;overflow:hidden">
<svg width="166" height="345" viewBox="1088 379.5 166 345"><path d="M1129.5 379V692" stroke="#a0a0a0" stroke-width="1"/><path d="M1130 388.5H1140" stroke="#a0a0a0" stroke-width="1"/><g fill="none" stroke="#3a3a8e" stroke-width="1.1"><rect x="1142.5" y="386.2" width="7.5" height="6.3" rx="0.8"/><rect x="1140.5" y="382.5" width="8" height="6.3" rx="0.8" fill="#fff"/></g><text x="1155" y="391.4" font-family="Liberation Sans" font-size="10.5" fill="#111">W.11</text><path d="M1130 404.6H1140" stroke="#a0a0a0" stroke-width="1"/><g fill="none" stroke="#3a3a8e" stroke-width="1.1"><rect x="1142.5" y="402.3" width="7.5" height="6.3" rx="0.8"/><rect x="1140.5" y="398.6" width="8" height="6.3" rx="0.8" fill="#fff"/></g><text x="1155" y="407.5" font-family="Liberation Sans" font-size="10.5" fill="#111">W.12</text><path d="M1130 420.7H1140" stroke="#a0a0a0" stroke-width="1"/><g fill="none" stroke="#3a3a8e" stroke-width="1.1"><rect x="1142.5" y="418.4" width="7.5" height="6.3" rx="0.8"/><rect x="1140.5" y="414.7" width="8" height="6.3" rx="0.8" fill="#fff"/></g><text x="1155" y="423.6" font-family="Liberation Sans" font-size="10.5" fill="#111">W.13</text><path d="M1130 436.9H1140" stroke="#a0a0a0" stroke-width="1"/><g fill="none" stroke="#3a3a8e" stroke-width="1.1"><rect x="1142.5" y="434.6" width="7.5" height="6.3" rx="0.8"/><rect x="1140.5" y="430.9" width="8" height="6.3" rx="0.8" fill="#fff"/></g><text x="1155" y="439.8" font-family="Liberation Sans" font-size="10.5" fill="#111">W.14</text><path d="M1130 453.0H1140" stroke="#a0a0a0" stroke-width="1"/><g fill="none" stroke="#3a3a8e" stroke-width="1.1"><rect x="1142.5" y="450.7" width="7.5" height="6.3" rx="0.8"/><rect x="1140.5" y="447.0" width="8" height="6.3" rx="0.8" fill="#fff"/></g><text x="1155" y="455.9" font-family="Liberation Sans" font-size="10.5" fill="#111">W.15</text><path d="M1130 469.1H1140" stroke="#a0a0a0" stroke-width="1"/><g fill="none" stroke="#3a3a8e" stroke-width="1.1"><rect x="1142.5" y="466.8" width="7.5" height="6.3" rx="0.8"/><rect x="1140.5" y="463.1" width="8" height="6.3" rx="0.8" fill="#fff"/></g><text x="1155" y="472.0" font-family="Liberation Sans" font-size="10.5" fill="#111">W.16</text><path d="M1130 485.2H1140" stroke="#a0a0a0" stroke-width="1"/><g fill="none" stroke="#3a3a8e" stroke-width="1.1"><rect x="1142.5" y="482.9" width="7.5" height="6.3" rx="0.8"/><rect x="1140.5" y="479.2" width="8" height="6.3" rx="0.8" fill="#fff"/></g><text x="1155" y="488.1" font-family="Liberation Sans" font-size="10.5" fill="#111">W.17</text><path d="M1130 501.3H1140" stroke="#a0a0a0" stroke-width="1"/><g fill="none" stroke="#3a3a8e" stroke-width="1.1"><rect x="1142.5" y="499.0" width="7.5" height="6.3" rx="0.8"/><rect x="1140.5" y="495.3" width="8" height="6.3" rx="0.8" fill="#fff"/></g><text x="1155" y="504.2" font-family="Liberation Sans" font-size="10.5" fill="#111">W.18</text><path d="M1130 517.5H1140" stroke="#a0a0a0" stroke-width="1"/><g fill="none" stroke="#3a3a8e" stroke-width="1.1"><rect x="1142.5" y="515.2" width="7.5" height="6.3" rx="0.8"/><rect x="1140.5" y="511.5" width="8" height="6.3" rx="0.8" fill="#fff"/></g><text x="1155" y="520.4" font-family="Liberation Sans" font-size="10.5" fill="#111">W.19</text><path d="M1130 533.6H1140" stroke="#a0a0a0" stroke-width="1"/><g fill="none" stroke="#3a3a8e" stroke-width="1.1"><rect x="1142.5" y="531.3" width="7.5" height="6.3" rx="0.8"/><rect x="1140.5" y="527.6" width="8" height="6.3" rx="0.8" fill="#fff"/></g><text x="1155" y="536.5" font-family="Liberation Sans" font-size="10.5" fill="#111">W.20</text><path d="M1130 549.7H1140" stroke="#a0a0a0" stroke-width="1"/><g fill="none" stroke="#3a3a8e" stroke-width="1.1"><rect x="1142.5" y="547.4" width="7.5" height="6.3" rx="0.8"/><rect x="1140.5" y="543.7" width="8" height="6.3" rx="0.8" fill="#fff"/></g><text x="1155" y="552.6" font-family="Liberation Sans" font-size="10.5" fill="#111">W.21</text><path d="M1130 565.8H1140" stroke="#a0a0a0" stroke-width="1"/><g fill="none" stroke="#3a3a8e" stroke-width="1.1"><rect x="1142.5" y="563.5" width="7.5" height="6.3" rx="0.8"/><rect x="1140.5" y="559.8" width="8" height="6.3" rx="0.8" fill="#fff"/></g><text x="1155" y="568.7" font-family="Liberation Sans" font-size="10.5" fill="#111">W.22</text><path d="M1130 581.9H1140" stroke="#a0a0a0" stroke-width="1"/><g fill="none" stroke="#3a3a8e" stroke-width="1.1"><rect x="1142.5" y="579.6" width="7.5" height="6.3" rx="0.8"/><rect x="1140.5" y="575.9" width="8" height="6.3" rx="0.8" fill="#fff"/></g><text x="1155" y="584.8" font-family="Liberation Sans" font-size="10.5" fill="#111">W.23</text><path d="M1130 598.1H1140" stroke="#a0a0a0" stroke-width="1"/><g fill="none" stroke="#3a3a8e" stroke-width="1.1"><rect x="1142.5" y="595.8" width="7.5" height="6.3" rx="0.8"/><rect x="1140.5" y="592.1" width="8" height="6.3" rx="0.8" fill="#fff"/></g><text x="1155" y="601.0" font-family="Liberation Sans" font-size="10.5" fill="#111">W.24</text><path d="M1130 614.2H1140" stroke="#a0a0a0" stroke-width="1"/><g fill="none" stroke="#3a3a8e" stroke-width="1.1"><rect x="1142.5" y="611.9" width="7.5" height="6.3" rx="0.8"/><rect x="1140.5" y="608.2" width="8" height="6.3" rx="0.8" fill="#fff"/></g><text x="1155" y="617.1" font-family="Liberation Sans" font-size="10.5" fill="#111">W.25</text><path d="M1130 630.3H1140" stroke="#a0a0a0" stroke-width="1"/><g fill="none" stroke="#3a3a8e" stroke-width="1.1"><rect x="1142.5" y="628.0" width="7.5" height="6.3" rx="0.8"/><rect x="1140.5" y="624.3" width="8" height="6.3" rx="0.8" fill="#fff"/></g><text x="1155" y="633.2" font-family="Liberation Sans" font-size="10.5" fill="#111">W.26</text><path d="M1130 646.4H1140" stroke="#a0a0a0" stroke-width="1"/><g fill="none" stroke="#3a3a8e" stroke-width="1.1"><rect x="1142.5" y="644.1" width="7.5" height="6.3" rx="0.8"/><rect x="1140.5" y="640.4" width="8" height="6.3" rx="0.8" fill="#fff"/></g><text x="1155" y="649.3" font-family="Liberation Sans" font-size="10.5" fill="#111">W.29</text><path d="M1130 662.5H1140" stroke="#a0a0a0" stroke-width="1"/><g fill="none" stroke="#3a3a8e" stroke-width="1.1"><rect x="1142.5" y="660.2" width="7.5" height="6.3" rx="0.8"/><rect x="1140.5" y="656.5" width="8" height="6.3" rx="0.8" fill="#fff"/></g><text x="1155" y="665.4" font-family="Liberation Sans" font-size="10.5" fill="#111">W.30</text><path d="M1130 678.7H1140" stroke="#a0a0a0" stroke-width="1"/><g fill="none" stroke="#3a3a8e" stroke-width="1.1"><rect x="1142.5" y="676.4" width="7.5" height="6.3" rx="0.8"/><rect x="1140.5" y="672.7" width="8" height="6.3" rx="0.8" fill="#fff"/></g><text x="1155" y="681.6" font-family="Liberation Sans" font-size="10.5" fill="#111">W.31</text><path d="M1130 694.8H1140" stroke="#a0a0a0" stroke-width="1"/><g fill="none" stroke="#3a3a8e" stroke-width="1.1"><rect x="1142.5" y="692.5" width="7.5" height="6.3" rx="0.8"/><rect x="1140.5" y="688.8" width="8" height="6.3" rx="0.8" fill="#fff"/></g><text x="1155" y="697.7" font-family="Liberation Sans" font-size="10.5" fill="#111">W.32</text><rect x="1239" y="379" width="15" height="313" fill="#f0f0f0"/><rect x="1239.5" y="520" width="13.5" height="99.5" fill="#cdcdcd"/><path d="M1242.5 390.5l3.5-3.5 3.5 3.5M1242.5 682.5l3.5 3.5 3.5-3.5" fill="none" stroke="#555" stroke-width="1.2"/><rect x="1088" y="692" width="166" height="16" fill="#f0f0f0"/><rect x="1104" y="693.5" width="102.5" height="13" fill="#cdcdcd"/><path d="M1098 697l-3.5 3.5 3.5 3.5M1228 697l3.5 3.5-3.5 3.5" fill="none" stroke="#555" stroke-width="1.2"/><path d="M1130.5 708V724" stroke="#d0d0d0" stroke-width="1"/><text x="1096.5" y="719.5" font-family="Liberation Sans" font-size="9.5" fill="#777">Spaces</text><text x="1137" y="719.5" font-family="Liberation Sans" font-size="9.5" font-weight="bold" fill="#222">Categories</text></svg>
</div>
<div class="a" style="left:1080px;top:723.5px;width:174px;height:3px;background:#555"></div><div class="t" style="left:276px;top:752px;font-size:10.5px;font-weight:bold;color:#f4f4f4">AutoCAD import</div>
<div class="a" style="left:371px;top:749px;width:1px;height:15px;background:#8c8c8c"></div>
<div class="t" style="left:387px;top:752px;font-size:10.5px;color:#a8a8a8">Adding facilities</div>
<div class="a" style="left:477px;top:749px;width:1px;height:15px;background:#8c8c8c"></div>
<div class="t" style="left:489px;top:752px;font-size:10.8px;color:#b8b8b8">All</div>
<svg class="a" style="left:503px;top:752px" width="12" height="10"><path d="M2 7.5h7l-3.5-4z" fill="#d0d0d0"/></svg>
<div class="a" style="left:527px;top:749px;width:1px;height:15px;background:#8c8c8c"></div>
<svg class="a" style="left:534px;top:748px" width="18" height="18"><circle cx="8.5" cy="8.5" r="6.3" fill="none" stroke="#e0e0e0" stroke-width="1.2"/><path d="M8.5 5.3v6.4M5.3 8.5h6.4" stroke="#e0e0e0" stroke-width="1.2"/></svg>
<div class="a" style="left:0;top:773px;width:1254px;height:28px;background:#5b5b5b"></div>
<div class="t" style="left:7px;top:783px;font-size:9px;color:#ececec">Page 1 of 2</div>
<div class="t" style="left:71px;top:783px;font-size:9px;color:#ececec">Width: 54.504 m.</div>
<div class="t" style="left:156px;top:783px;font-size:9px;color:#ececec">Height: 41.511 m.</div>
<div class="t" style="left:243px;top:783px;font-size:9px;color:#ececec">Angle: 0°</div>
<div class="t" style="left:297px;top:783px;font-size:9px;color:#ececec">English (United States)</div>
<svg class="a" style="left:405px;top:779px" width="18" height="16"><rect x="4" y="4" width="10" height="9" fill="none" stroke="#e6e6e6" stroke-width="1"/><path d="M4 6.5h10M6.5 8.5h1M9 8.5h1M11.5 8.5h1M6.5 10.5h1M9 10.5h1M11.5 10.5h1" stroke="#e6e6e6"/><rect x="3" y="2" width="4" height="3" fill="#e6e6e6"/></svg>
<div class="a" style="left:1006px;top:773px;width:31px;height:28px;background:#303030"></div>
<svg class="a" style="left:1006px;top:773px" width="248" height="28" viewBox="1006 773 248 28">
 <rect x="1015" y="781.5" width="12" height="7" fill="none" stroke="#e6e6e6" stroke-width="1"/>
 <path d="M1014 781.5h14M1021 788.5v3.5M1018 792.5h6" stroke="#e6e6e6" stroke-width="1"/>
 <path d="M1042 787.5h5" stroke="#f0f0f0" stroke-width="1.4"/>
 <path d="M1050 787.5h90" stroke="#aaa" stroke-width="1"/>
 <path d="M1094.5 785v5" stroke="#bbb" stroke-width="1"/>
 <rect x="1069.5" y="782" width="3.5" height="11" fill="#f0f0f0"/>
 <path d="M1141.5 787.5h7M1145 784v7" stroke="#f0f0f0" stroke-width="1.4"/>
 <rect x="1199.5" y="783" width="9" height="9" fill="none" stroke="#ddd" stroke-width="1"/>
 <path d="M1202 783v2.5M1206 783v2.5M1202 792v-2.5M1206 792v-2.5M1199.5 785.5h2.5M1199.5 789.5h2.5M1208.5 785.5h-2.5M1208.5 789.5h-2.5" stroke="#5b5b5b" stroke-width="1.5"/>
 <rect x="1230.5" y="782" width="5" height="4" fill="none" stroke="#ddd"/><rect x="1237.5" y="782" width="4" height="4" fill="none" stroke="#ddd"/>
 <rect x="1230.5" y="789" width="4" height="4" fill="none" stroke="#ddd"/><rect x="1236.5" y="788" width="5" height="4" fill="none" stroke="#ddd"/>
</svg>
<div class="t" style="left:1161px;top:782.5px;font-size:9.4px;color:#ececec">51%</div>
<div class="a" style="left:0;top:801px;width:1254px;height:35px;background:#0f1010"></div>
<div class="a" style="left:41px;top:801px;width:299px;height:35px;background:#2b2b2b"></div>
<svg class="a" style="left:0;top:801px" width="41" height="35"><path d="M13.7 11.8l6.5-0.9v6.4h-6.5zM21.1 10.8l7-1v7.5h-7zM13.7 18.2h6.5v6.4l-6.5-0.9zM21.1 18.2h7v7.5l-7-1z" fill="#f4f4f4"/></svg>
<div class="t" style="left:52.5px;top:812.5px;font-size:12px;color:#9c9c9c">Search the web and Windows</div>
<svg class="a" style="left:340px;top:801px" width="100" height="35" viewBox="340 801 100 35">
 <rect x="356.5" y="813.5" width="12" height="10" fill="none" stroke="#e0e0e0" stroke-width="1.2"/>
 <path d="M353.5 815.5v6M371.5 815.5v6" stroke="#e0e0e0" stroke-width="1"/>
 <rect x="386" y="801" width="42" height="35" fill="#3b3b3b"/>
 <rect x="386" y="834" width="42" height="2" fill="#a9c7e8"/>
 <rect x="398" y="810" width="19" height="16" fill="#3a5db0"/>
 <rect x="408" y="811" width="8" height="14" fill="#fff" opacity="0.9"/>
 <text x="398.5" y="823" font-family="Liberation Sans" font-size="12" font-weight="bold" fill="#fff">V</text>
 <rect x="410" y="814" width="4" height="3" fill="#3a5db0"/><rect x="410" y="819" width="4" height="3" fill="#3a5db0"/>
</svg>
<svg class="a" style="left:1070px;top:801px" width="184" height="35" viewBox="1070 801 184 35">
 <path d="M1085 821.5l4.5-4.5 4.5 4.5" fill="none" stroke="#e0e0e0" stroke-width="1.1"/>
 <rect x="1112.5" y="815.5" width="13" height="7" fill="#e0e0e0"/><path d="M1110.5 813.5l2 2M1114 813v2" stroke="#e0e0e0"/>
 <rect x="1141.5" y="813.5" width="11" height="8" fill="none" stroke="#e0e0e0" stroke-width="1"/><path d="M1146 821.5v3h-4M1139 817.5h2.5M1139 817.5v7" fill="none" stroke="#e0e0e0" stroke-width="1"/>
 <path d="M1167 816h2.5l3.5-3v11l-3.5-3H1167z" fill="none" stroke="#e0e0e0" stroke-width="1"/><path d="M1175 816l4 4M1179 816l-4 4" stroke="#e0e0e0" stroke-width="1"/>
 <path d="M1195.5 812.5h13v9h-8l-2.5 2.5v-2.5h-2.5z" fill="#e8e8e8"/>
 <rect x="1227.5" y="813" width="17" height="10" fill="none" stroke="#e0e0e0" stroke-width="1"/><path d="M1230 816h12M1230 818.5h12M1232 821h8" stroke="#e0e0e0" stroke-width="0.8" stroke-dasharray="1 1"/>
</svg>

</body></html>
